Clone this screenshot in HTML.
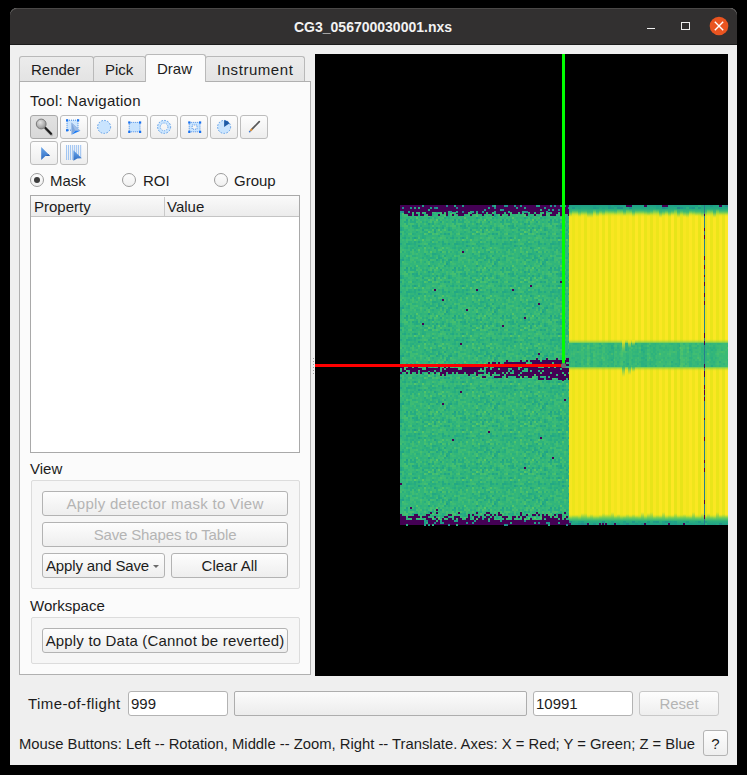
<!DOCTYPE html>
<html><head><meta charset="utf-8">
<style>
*{box-sizing:border-box;margin:0;padding:0}
html,body{width:747px;height:775px;background:#000;overflow:hidden;font-family:"Liberation Sans",sans-serif;font-size:15px;color:#1c1c1c}
.a{position:absolute}
.t{position:absolute;white-space:pre;line-height:17px;height:17px}
#win{position:absolute;left:10px;top:8px;width:727px;height:757px;background:#efefef;border-radius:7px 7px 0 0;overflow:hidden}
#title{position:absolute;left:10px;top:8px;width:727px;height:37px;background:#323030;border-radius:7px 7px 0 0;border-top:1px solid #4a4847;border-bottom:1px solid #1c1c1c}
.tab{position:absolute;top:56px;height:26px;background:linear-gradient(#ececec,#e3e3e3);border:1px solid #b9b9b9;border-bottom:none;border-radius:3px 3px 0 0}
.tab.sel{top:54px;height:28px;background:#fbfbfb;z-index:2}
#pane{position:absolute;left:19px;top:81px;width:292px;height:594px;background:#fbfbfb;border:1px solid #b0b0b0;z-index:1}
.tb{position:absolute;width:28px;height:24px;border:1px solid #bdbdbd;border-radius:3px;background:linear-gradient(#fdfdfd,#ededed);z-index:3}
.tb svg{display:block}
.radio{position:absolute;width:14px;height:14px;border-radius:50%;border:1px solid #9c9c9c;background:linear-gradient(#fdfdfd,#f0f0f0);z-index:3}
.btn{position:absolute;border:1px solid #b3b3b3;border-radius:3px;background:linear-gradient(#fdfdfd,#eeeeee);z-index:4}
.gb{position:absolute;border:1px solid #dcdcdc;border-radius:2px;background:#f6f6f6;z-index:3}
.inp{position:absolute;background:#fff;border:1px solid #b3b3b3;border-radius:3px}
.dis{color:#b4b4b4}
.z{z-index:5}
</style></head><body>
<div id="win"></div>
<div id="title"></div>
<div class="t z" style="left:294px;top:19px;font-weight:bold;font-size:14px;color:#f2f2f2">CG3_056700030001.nxs</div>
<!-- window controls -->
<div class="a" style="left:647px;top:28px;width:8px;height:1.3px;background:#f0f0f0"></div>
<div class="a" style="left:681px;top:22px;width:9px;height:8px;border:1.3px solid #f0f0f0"></div>
<svg class="a" style="left:709px;top:16px" width="20" height="20" viewBox="0 0 20 20"><circle cx="10" cy="10" r="9.3" fill="#e95420"/><path d="M5.8 5.8L14.2 14.2M14.2 5.8L5.8 14.2" stroke="#fff" stroke-width="1.4"/></svg>

<!-- tabs -->
<div class="tab" style="left:19px;width:75px"></div>
<div class="tab" style="left:93px;width:53px"></div>
<div class="tab sel" style="left:145px;width:61px"></div>
<div class="tab" style="left:205px;width:100px"></div>
<div class="t z" style="left:31px;top:61px">Render</div>
<div class="t z" style="left:105px;top:61px">Pick</div>
<div class="t z" style="left:157px;top:60px">Draw</div>
<div class="t z" style="left:217px;top:61px;letter-spacing:0.55px">Instrument</div>
<div id="pane"></div>

<div class="t z" style="left:30px;top:92px;letter-spacing:0.25px">Tool: Navigation</div>
<!-- tool buttons -->
<div class="tb" style="left:30px;top:115px;background:linear-gradient(#e2e2e2,#d8d8d8);border-color:#a8a8a8"><div class="a" style="left:-1px;top:-1px"><svg width="28" height="24" viewBox="0 0 28 24"><defs><radialGradient id="lg" cx="0.4" cy="0.35" r="0.7"><stop offset="0" stop-color="#e4e4e4"/><stop offset="1" stop-color="#8e8e8e"/></radialGradient></defs><path d="M15.2 12.8L21 18.8" stroke="#6b6b6b" stroke-width="3" stroke-linecap="round" opacity="0.35" transform="translate(0.6,0.8)"/><path d="M15.2 12.8L21 18.8" stroke="#1e1e1e" stroke-width="2.2" stroke-linecap="round"/><circle cx="11.2" cy="9" r="4.9" fill="url(#lg)" stroke="#7a7a7a" stroke-width="1"/></svg></div></div>
<div class="tb" style="left:60px;top:115px"><div class="a" style="left:-1px;top:-1px"><svg width="28" height="24" viewBox="0 0 28 24"><rect x="7" y="5.2" width="11" height="10" fill="#cfe6fd" stroke="#2f7fe0" stroke-width="0.9" stroke-dasharray="1 1"/><g fill="#1b74ef"><rect x="6" y="4.2" width="2.2" height="2.2"/><rect x="17" y="4.2" width="2.2" height="2.2"/><rect x="6" y="14.2" width="2.2" height="2.2"/></g><path d="M11.4 7.6L20.3 15.8L15.3 15.8L11.4 19.8Z" fill="#7ea6dc"/><path d="M11.4 7.6L15.3 15.8L20.3 15.8Z" fill="#9fbde6"/><path d="M15.3 15.8L20.3 15.8L11.4 19.8Z" fill="#1c7cf5"/></svg></div></div>
<div class="tb" style="left:90px;top:115px"><div class="a" style="left:-1px;top:-1px"><svg width="28" height="24" viewBox="0 0 28 24"><circle cx="14.1" cy="11.9" r="6.5" fill="#c9e4fe" stroke="#5d9ee8" stroke-width="1" stroke-dasharray="1.6 1.4"/></svg></div></div>
<div class="tb" style="left:120px;top:115px"><div class="a" style="left:-1px;top:-1px"><svg width="28" height="24" viewBox="0 0 28 24"><rect x="9.2" y="7.4" width="10.8" height="9.4" fill="#c9e4fe" stroke="#3b84e4" stroke-width="0.9" stroke-dasharray="1 1"/><g fill="#1670f0"><rect x="8.2" y="6.4" width="2.2" height="2.2"/><rect x="19" y="6.4" width="2.2" height="2.2"/><rect x="8.2" y="15.8" width="2.2" height="2.2"/><rect x="19" y="15.8" width="2.2" height="2.2"/></g></svg></div></div>
<div class="tb" style="left:150px;top:115px"><div class="a" style="left:-1px;top:-1px"><svg width="28" height="24" viewBox="0 0 28 24"><path d="M14.1 5.4A6.5 6.5 0 1 1 14.09 5.4ZM14.1 8.1A3.8 3.8 0 1 0 14.11 8.1Z" fill="#c9e4fe" fill-rule="evenodd"/><circle cx="14.1" cy="11.9" r="6.5" fill="none" stroke="#5d9ee8" stroke-width="1" stroke-dasharray="1.6 1.4"/><circle cx="14.1" cy="11.9" r="3.8" fill="none" stroke="#5d9ee8" stroke-width="0.9" stroke-dasharray="1.2 1.2"/></svg></div></div>
<div class="tb" style="left:180px;top:115px"><div class="a" style="left:-1px;top:-1px"><svg width="28" height="24" viewBox="0 0 28 24"><path d="M9.2 7.4H20V16.8H9.2ZM12.2 10V14.2H17V10Z" fill="#c9e4fe" fill-rule="evenodd"/><rect x="9.2" y="7.4" width="10.8" height="9.4" fill="none" stroke="#3b84e4" stroke-width="0.9" stroke-dasharray="1 1"/><rect x="12.2" y="10" width="4.8" height="4.2" fill="none" stroke="#3b84e4" stroke-width="0.8" stroke-dasharray="1 1"/><g fill="#1670f0"><rect x="8.2" y="6.4" width="2.2" height="2.2"/><rect x="19" y="6.4" width="2.2" height="2.2"/><rect x="8.2" y="15.8" width="2.2" height="2.2"/><rect x="19" y="15.8" width="2.2" height="2.2"/></g></svg></div></div>
<div class="tb" style="left:210px;top:115px"><div class="a" style="left:-1px;top:-1px"><svg width="28" height="24" viewBox="0 0 28 24"><circle cx="14.1" cy="11.9" r="6.5" fill="#c9e4fe" stroke="#5d9ee8" stroke-width="1" stroke-dasharray="1.6 1.4"/><path d="M14.1 11.9L14.1 5.2A6.7 6.7 0 0 1 19.6 8.2Z" fill="#1d5aa6"/></svg></div></div>
<div class="tb" style="left:240px;top:115px"><div class="a" style="left:-1px;top:-1px"><svg width="28" height="24" viewBox="0 0 28 24"><path d="M12 14.2L19.3 6.6" stroke="#585858" stroke-width="1.7" stroke-linecap="round"/><path d="M10.2 16L12.2 14" stroke="#d08a3a" stroke-width="1.8"/><circle cx="9.7" cy="16.6" r="0.9" fill="#3a78d8"/></svg></div></div>
<div class="tb" style="left:30px;top:141px"><div class="a" style="left:-1px;top:-1px"><svg width="28" height="24" viewBox="0 0 28 24"><defs><linearGradient id="ag" x1="0" y1="0" x2="0" y2="1"><stop offset="0" stop-color="#6aa6ea"/><stop offset="1" stop-color="#2f6cc2"/></linearGradient></defs><path d="M11.2 6L20 14.7L15.4 14.9L11.2 19Z" fill="url(#ag)"/><path d="M15.4 14.9L20 14.7L18.6 13.3Z" fill="#2559a8"/></svg></div></div>
<div class="tb" style="left:60px;top:141px"><div class="a" style="left:-1px;top:-1px"><svg width="28" height="24" viewBox="0 0 28 24"><g stroke="#8dbaf0" stroke-width="0.9"><path d="M6.6 4V19M8.6 4V19M10.6 4V19M12.7 4V19M14.7 4V12M16.7 4V14M18.6 4V16M20.7 4V17"/></g><path d="M13.4 9.2L21.8 17.3L17.3 17.5L13.4 19.8Z" fill="url(#ag)"/></svg></div></div>

<!-- radios -->
<div class="radio" style="left:30px;top:173px"><div class="a" style="left:3px;top:3px;width:6px;height:6px;border-radius:50%;background:#3c3c3c"></div></div>
<div class="t z" style="left:50px;top:172px">Mask</div>
<div class="radio" style="left:122px;top:173px"></div>
<div class="t z" style="left:143px;top:172px">ROI</div>
<div class="radio" style="left:214px;top:173px"></div>
<div class="t z" style="left:234px;top:172px">Group</div>

<!-- table -->
<div class="a z" style="left:30px;top:195px;width:270px;height:258px;background:#fff;border:1px solid #a9a9a9"></div>
<div class="a z" style="left:31px;top:196px;width:268px;height:21px;background:linear-gradient(#fafafa,#ececec);border-bottom:1px solid #c4c4c4"></div>
<div class="a z" style="left:164px;top:197px;width:1px;height:19px;background:#c9c9c9"></div>
<div class="t z" style="left:34px;top:198px">Property</div>
<div class="t z" style="left:167px;top:198px">Value</div>

<div class="t z" style="left:30px;top:460px">View</div>
<div class="gb" style="left:31px;top:480px;width:269px;height:109px"></div>
<div class="btn" style="left:42px;top:491px;width:246px;height:25px"></div>
<div class="t z dis" style="left:42px;width:246px;text-align:center;top:495px;letter-spacing:0.3px">Apply detector mask to View</div>
<div class="btn" style="left:42px;top:522px;width:246px;height:25px"></div>
<div class="t z dis" style="left:42px;width:246px;text-align:center;top:526px;letter-spacing:-0.15px">Save Shapes to Table</div>
<div class="btn" style="left:42px;top:553px;width:123px;height:25px"></div>
<div class="t z" style="left:46px;top:557px;letter-spacing:-0.15px">Apply and Save</div>
<div class="a z" style="left:153px;top:565px;width:0;height:0;border-left:3px solid transparent;border-right:3px solid transparent;border-top:3px solid #6a6a6a"></div>
<div class="btn" style="left:171px;top:553px;width:117px;height:25px"></div>
<div class="t z" style="left:171px;width:117px;text-align:center;top:557px">Clear All</div>

<div class="t z" style="left:30px;top:597px">Workspace</div>
<div class="gb" style="left:31px;top:617px;width:269px;height:47px"></div>
<div class="btn" style="left:42px;top:628px;width:246px;height:25px"></div>
<div class="t z" style="left:42px;width:246px;text-align:center;top:632px;letter-spacing:0.18px">Apply to Data (Cannot be reverted)</div>

<!-- view -->
<svg class="a" style="left:315px;top:54px" width="413" height="622" viewBox="0 0 413 622" shape-rendering="crispEdges">
<defs>
<pattern id="tex" x="85" y="151" width="48" height="48" patternUnits="userSpaceOnUse">
<rect width="48" height="48" fill="#31b57b"/>
<rect x="2" y="0" width="2" height="2" fill="#37b878"/>
<rect x="8" y="0" width="2" height="2" fill="#28ae80"/>
<rect x="12" y="0" width="2" height="2" fill="#3fbc73"/>
<rect x="14" y="0" width="2" height="2" fill="#37b878"/>
<rect x="16" y="0" width="2" height="2" fill="#3fbc73"/>
<rect x="20" y="0" width="2" height="2" fill="#35b779"/>
<rect x="24" y="0" width="2" height="2" fill="#23a983"/>
<rect x="26" y="0" width="2" height="2" fill="#3bbb75"/>
<rect x="28" y="0" width="2" height="2" fill="#37b878"/>
<rect x="30" y="0" width="2" height="2" fill="#37b878"/>
<rect x="32" y="0" width="2" height="2" fill="#22a884"/>
<rect x="34" y="0" width="2" height="2" fill="#22a884"/>
<rect x="36" y="0" width="2" height="2" fill="#28ae80"/>
<rect x="38" y="0" width="2" height="2" fill="#2cb17e"/>
<rect x="44" y="0" width="2" height="2" fill="#37b878"/>
<rect x="46" y="0" width="2" height="2" fill="#2ab07f"/>
<rect x="2" y="2" width="2" height="2" fill="#35b779"/>
<rect x="4" y="2" width="2" height="2" fill="#2ab07f"/>
<rect x="6" y="2" width="2" height="2" fill="#48c16e"/>
<rect x="8" y="2" width="2" height="2" fill="#38b977"/>
<rect x="10" y="2" width="2" height="2" fill="#40bd72"/>
<rect x="12" y="2" width="2" height="2" fill="#2ab07f"/>
<rect x="14" y="2" width="2" height="2" fill="#29af7f"/>
<rect x="20" y="2" width="2" height="2" fill="#38b977"/>
<rect x="24" y="2" width="2" height="2" fill="#2db27d"/>
<rect x="26" y="2" width="2" height="2" fill="#27ad81"/>
<rect x="28" y="2" width="2" height="2" fill="#2cb17e"/>
<rect x="30" y="2" width="2" height="2" fill="#40bd72"/>
<rect x="32" y="2" width="2" height="2" fill="#29af7f"/>
<rect x="36" y="2" width="2" height="2" fill="#37b878"/>
<rect x="38" y="2" width="2" height="2" fill="#24aa83"/>
<rect x="42" y="2" width="2" height="2" fill="#42be71"/>
<rect x="44" y="2" width="2" height="2" fill="#21a685"/>
<rect x="2" y="4" width="2" height="2" fill="#28ae80"/>
<rect x="4" y="4" width="2" height="2" fill="#37b878"/>
<rect x="8" y="4" width="2" height="2" fill="#24aa83"/>
<rect x="10" y="4" width="2" height="2" fill="#3bbb75"/>
<rect x="12" y="4" width="2" height="2" fill="#3aba76"/>
<rect x="14" y="4" width="2" height="2" fill="#3dbc74"/>
<rect x="16" y="4" width="2" height="2" fill="#44bf70"/>
<rect x="22" y="4" width="2" height="2" fill="#25ac82"/>
<rect x="24" y="4" width="2" height="2" fill="#38b977"/>
<rect x="26" y="4" width="2" height="2" fill="#2ab07f"/>
<rect x="28" y="4" width="2" height="2" fill="#2cb17e"/>
<rect x="30" y="4" width="2" height="2" fill="#25ac82"/>
<rect x="32" y="4" width="2" height="2" fill="#27ad81"/>
<rect x="34" y="4" width="2" height="2" fill="#2cb17e"/>
<rect x="36" y="4" width="2" height="2" fill="#42be71"/>
<rect x="38" y="4" width="2" height="2" fill="#21a685"/>
<rect x="40" y="4" width="2" height="2" fill="#24aa83"/>
<rect x="44" y="4" width="2" height="2" fill="#44bf70"/>
<rect x="46" y="4" width="2" height="2" fill="#38b977"/>
<rect x="0" y="6" width="2" height="2" fill="#22a785"/>
<rect x="2" y="6" width="2" height="2" fill="#1fa287"/>
<rect x="6" y="6" width="2" height="2" fill="#29af7f"/>
<rect x="8" y="6" width="2" height="2" fill="#26ad81"/>
<rect x="10" y="6" width="2" height="2" fill="#3dbc74"/>
<rect x="12" y="6" width="2" height="2" fill="#3fbc73"/>
<rect x="18" y="6" width="2" height="2" fill="#37b878"/>
<rect x="20" y="6" width="2" height="2" fill="#46c06f"/>
<rect x="22" y="6" width="2" height="2" fill="#38b977"/>
<rect x="24" y="6" width="2" height="2" fill="#37b878"/>
<rect x="26" y="6" width="2" height="2" fill="#38b977"/>
<rect x="28" y="6" width="2" height="2" fill="#23a983"/>
<rect x="30" y="6" width="2" height="2" fill="#42be71"/>
<rect x="32" y="6" width="2" height="2" fill="#3dbc74"/>
<rect x="34" y="6" width="2" height="2" fill="#38b977"/>
<rect x="36" y="6" width="2" height="2" fill="#21a685"/>
<rect x="38" y="6" width="2" height="2" fill="#2ab07f"/>
<rect x="40" y="6" width="2" height="2" fill="#3bbb75"/>
<rect x="42" y="6" width="2" height="2" fill="#22a785"/>
<rect x="46" y="6" width="2" height="2" fill="#3fbc73"/>
<rect x="0" y="8" width="2" height="2" fill="#25ab82"/>
<rect x="2" y="8" width="2" height="2" fill="#46c06f"/>
<rect x="4" y="8" width="2" height="2" fill="#38b977"/>
<rect x="10" y="8" width="2" height="2" fill="#3aba76"/>
<rect x="14" y="8" width="2" height="2" fill="#40bd72"/>
<rect x="16" y="8" width="2" height="2" fill="#2ab07f"/>
<rect x="18" y="8" width="2" height="2" fill="#2db27d"/>
<rect x="20" y="8" width="2" height="2" fill="#3fbc73"/>
<rect x="24" y="8" width="2" height="2" fill="#28ae80"/>
<rect x="26" y="8" width="2" height="2" fill="#3dbc74"/>
<rect x="28" y="8" width="2" height="2" fill="#44bf70"/>
<rect x="30" y="8" width="2" height="2" fill="#2db27d"/>
<rect x="32" y="8" width="2" height="2" fill="#25ab82"/>
<rect x="40" y="8" width="2" height="2" fill="#44bf70"/>
<rect x="42" y="8" width="2" height="2" fill="#27ad81"/>
<rect x="44" y="8" width="2" height="2" fill="#42be71"/>
<rect x="46" y="8" width="2" height="2" fill="#25ac82"/>
<rect x="0" y="10" width="2" height="2" fill="#29af7f"/>
<rect x="2" y="10" width="2" height="2" fill="#38b977"/>
<rect x="4" y="10" width="2" height="2" fill="#3fbc73"/>
<rect x="6" y="10" width="2" height="2" fill="#3bbb75"/>
<rect x="14" y="10" width="2" height="2" fill="#38b977"/>
<rect x="20" y="10" width="2" height="2" fill="#38b977"/>
<rect x="24" y="10" width="2" height="2" fill="#3aba76"/>
<rect x="26" y="10" width="2" height="2" fill="#38b977"/>
<rect x="28" y="10" width="2" height="2" fill="#4ec36b"/>
<rect x="32" y="10" width="2" height="2" fill="#2db27d"/>
<rect x="38" y="10" width="2" height="2" fill="#3dbc74"/>
<rect x="42" y="10" width="2" height="2" fill="#35b779"/>
<rect x="44" y="10" width="2" height="2" fill="#4ac16d"/>
<rect x="46" y="10" width="2" height="2" fill="#1fa187"/>
<rect x="0" y="12" width="2" height="2" fill="#26ad81"/>
<rect x="4" y="12" width="2" height="2" fill="#35b779"/>
<rect x="8" y="12" width="2" height="2" fill="#2db27d"/>
<rect x="10" y="12" width="2" height="2" fill="#3aba76"/>
<rect x="14" y="12" width="2" height="2" fill="#2cb17e"/>
<rect x="16" y="12" width="2" height="2" fill="#54c568"/>
<rect x="20" y="12" width="2" height="2" fill="#2cb17e"/>
<rect x="28" y="12" width="2" height="2" fill="#1fa188"/>
<rect x="30" y="12" width="2" height="2" fill="#2cb17e"/>
<rect x="32" y="12" width="2" height="2" fill="#3dbc74"/>
<rect x="34" y="12" width="2" height="2" fill="#26ad81"/>
<rect x="38" y="12" width="2" height="2" fill="#3dbc74"/>
<rect x="40" y="12" width="2" height="2" fill="#3bbb75"/>
<rect x="42" y="12" width="2" height="2" fill="#44bf70"/>
<rect x="44" y="12" width="2" height="2" fill="#22a884"/>
<rect x="2" y="14" width="2" height="2" fill="#38b977"/>
<rect x="4" y="14" width="2" height="2" fill="#3fbc73"/>
<rect x="6" y="14" width="2" height="2" fill="#1fa188"/>
<rect x="8" y="14" width="2" height="2" fill="#3fbc73"/>
<rect x="10" y="14" width="2" height="2" fill="#24aa83"/>
<rect x="12" y="14" width="2" height="2" fill="#3aba76"/>
<rect x="14" y="14" width="2" height="2" fill="#24aa83"/>
<rect x="18" y="14" width="2" height="2" fill="#40bd72"/>
<rect x="24" y="14" width="2" height="2" fill="#3bbb75"/>
<rect x="30" y="14" width="2" height="2" fill="#46c06f"/>
<rect x="32" y="14" width="2" height="2" fill="#3fbc73"/>
<rect x="36" y="14" width="2" height="2" fill="#5ac864"/>
<rect x="38" y="14" width="2" height="2" fill="#26ad81"/>
<rect x="40" y="14" width="2" height="2" fill="#3dbc74"/>
<rect x="46" y="14" width="2" height="2" fill="#3aba76"/>
<rect x="2" y="16" width="2" height="2" fill="#38b977"/>
<rect x="4" y="16" width="2" height="2" fill="#24aa83"/>
<rect x="6" y="16" width="2" height="2" fill="#24aa83"/>
<rect x="8" y="16" width="2" height="2" fill="#38b977"/>
<rect x="10" y="16" width="2" height="2" fill="#27ad81"/>
<rect x="12" y="16" width="2" height="2" fill="#27ad81"/>
<rect x="14" y="16" width="2" height="2" fill="#24aa83"/>
<rect x="16" y="16" width="2" height="2" fill="#42be71"/>
<rect x="18" y="16" width="2" height="2" fill="#3aba76"/>
<rect x="20" y="16" width="2" height="2" fill="#44bf70"/>
<rect x="22" y="16" width="2" height="2" fill="#27ad81"/>
<rect x="26" y="16" width="2" height="2" fill="#26ad81"/>
<rect x="28" y="16" width="2" height="2" fill="#3aba76"/>
<rect x="30" y="16" width="2" height="2" fill="#46c06f"/>
<rect x="32" y="16" width="2" height="2" fill="#28ae80"/>
<rect x="34" y="16" width="2" height="2" fill="#46c06f"/>
<rect x="36" y="16" width="2" height="2" fill="#3dbc74"/>
<rect x="40" y="16" width="2" height="2" fill="#21a685"/>
<rect x="42" y="16" width="2" height="2" fill="#44bf70"/>
<rect x="46" y="16" width="2" height="2" fill="#2ab07f"/>
<rect x="0" y="18" width="2" height="2" fill="#35b779"/>
<rect x="2" y="18" width="2" height="2" fill="#37b878"/>
<rect x="4" y="18" width="2" height="2" fill="#44bf70"/>
<rect x="6" y="18" width="2" height="2" fill="#27ad81"/>
<rect x="8" y="18" width="2" height="2" fill="#3fbc73"/>
<rect x="10" y="18" width="2" height="2" fill="#44bf70"/>
<rect x="12" y="18" width="2" height="2" fill="#44bf70"/>
<rect x="16" y="18" width="2" height="2" fill="#29af7f"/>
<rect x="18" y="18" width="2" height="2" fill="#3fbc73"/>
<rect x="24" y="18" width="2" height="2" fill="#44bf70"/>
<rect x="28" y="18" width="2" height="2" fill="#20a386"/>
<rect x="30" y="18" width="2" height="2" fill="#2db27d"/>
<rect x="32" y="18" width="2" height="2" fill="#22a785"/>
<rect x="34" y="18" width="2" height="2" fill="#3bbb75"/>
<rect x="38" y="18" width="2" height="2" fill="#2ab07f"/>
<rect x="42" y="18" width="2" height="2" fill="#3bbb75"/>
<rect x="46" y="18" width="2" height="2" fill="#42be71"/>
<rect x="2" y="20" width="2" height="2" fill="#3fbc73"/>
<rect x="4" y="20" width="2" height="2" fill="#44bf70"/>
<rect x="6" y="20" width="2" height="2" fill="#46c06f"/>
<rect x="8" y="20" width="2" height="2" fill="#2ab07f"/>
<rect x="10" y="20" width="2" height="2" fill="#3bbb75"/>
<rect x="12" y="20" width="2" height="2" fill="#22a785"/>
<rect x="14" y="20" width="2" height="2" fill="#26ad81"/>
<rect x="16" y="20" width="2" height="2" fill="#21a685"/>
<rect x="18" y="20" width="2" height="2" fill="#3fbc73"/>
<rect x="20" y="20" width="2" height="2" fill="#25ac82"/>
<rect x="28" y="20" width="2" height="2" fill="#2ab07f"/>
<rect x="32" y="20" width="2" height="2" fill="#4ac16d"/>
<rect x="36" y="20" width="2" height="2" fill="#38b977"/>
<rect x="38" y="20" width="2" height="2" fill="#3dbc74"/>
<rect x="42" y="20" width="2" height="2" fill="#25ac82"/>
<rect x="44" y="20" width="2" height="2" fill="#2cb17e"/>
<rect x="46" y="20" width="2" height="2" fill="#3fbc73"/>
<rect x="0" y="22" width="2" height="2" fill="#23a983"/>
<rect x="2" y="22" width="2" height="2" fill="#2ab07f"/>
<rect x="4" y="22" width="2" height="2" fill="#3dbc74"/>
<rect x="6" y="22" width="2" height="2" fill="#3bbb75"/>
<rect x="10" y="22" width="2" height="2" fill="#3bbb75"/>
<rect x="14" y="22" width="2" height="2" fill="#26ad81"/>
<rect x="16" y="22" width="2" height="2" fill="#23a983"/>
<rect x="18" y="22" width="2" height="2" fill="#2ab07f"/>
<rect x="20" y="22" width="2" height="2" fill="#3dbc74"/>
<rect x="22" y="22" width="2" height="2" fill="#2cb17e"/>
<rect x="24" y="22" width="2" height="2" fill="#28ae80"/>
<rect x="26" y="22" width="2" height="2" fill="#29af7f"/>
<rect x="28" y="22" width="2" height="2" fill="#24aa83"/>
<rect x="32" y="22" width="2" height="2" fill="#26ad81"/>
<rect x="36" y="22" width="2" height="2" fill="#20a386"/>
<rect x="40" y="22" width="2" height="2" fill="#2ab07f"/>
<rect x="42" y="22" width="2" height="2" fill="#21a685"/>
<rect x="44" y="22" width="2" height="2" fill="#3aba76"/>
<rect x="0" y="24" width="2" height="2" fill="#20a486"/>
<rect x="2" y="24" width="2" height="2" fill="#28ae80"/>
<rect x="6" y="24" width="2" height="2" fill="#2cb17e"/>
<rect x="8" y="24" width="2" height="2" fill="#3bbb75"/>
<rect x="10" y="24" width="2" height="2" fill="#3aba76"/>
<rect x="12" y="24" width="2" height="2" fill="#3aba76"/>
<rect x="16" y="24" width="2" height="2" fill="#42be71"/>
<rect x="18" y="24" width="2" height="2" fill="#3aba76"/>
<rect x="20" y="24" width="2" height="2" fill="#37b878"/>
<rect x="22" y="24" width="2" height="2" fill="#21a585"/>
<rect x="24" y="24" width="2" height="2" fill="#3dbc74"/>
<rect x="26" y="24" width="2" height="2" fill="#42be71"/>
<rect x="30" y="24" width="2" height="2" fill="#2cb17e"/>
<rect x="32" y="24" width="2" height="2" fill="#4cc26c"/>
<rect x="34" y="24" width="2" height="2" fill="#22a884"/>
<rect x="36" y="24" width="2" height="2" fill="#37b878"/>
<rect x="38" y="24" width="2" height="2" fill="#54c568"/>
<rect x="40" y="24" width="2" height="2" fill="#28ae80"/>
<rect x="42" y="24" width="2" height="2" fill="#3aba76"/>
<rect x="44" y="24" width="2" height="2" fill="#4cc26c"/>
<rect x="0" y="26" width="2" height="2" fill="#38b977"/>
<rect x="2" y="26" width="2" height="2" fill="#3dbc74"/>
<rect x="4" y="26" width="2" height="2" fill="#28ae80"/>
<rect x="10" y="26" width="2" height="2" fill="#3bbb75"/>
<rect x="16" y="26" width="2" height="2" fill="#27ad81"/>
<rect x="20" y="26" width="2" height="2" fill="#3bbb75"/>
<rect x="24" y="26" width="2" height="2" fill="#28ae80"/>
<rect x="26" y="26" width="2" height="2" fill="#28ae80"/>
<rect x="28" y="26" width="2" height="2" fill="#58c765"/>
<rect x="30" y="26" width="2" height="2" fill="#40bd72"/>
<rect x="32" y="26" width="2" height="2" fill="#38b977"/>
<rect x="34" y="26" width="2" height="2" fill="#1fa187"/>
<rect x="36" y="26" width="2" height="2" fill="#38b977"/>
<rect x="38" y="26" width="2" height="2" fill="#37b878"/>
<rect x="40" y="26" width="2" height="2" fill="#48c16e"/>
<rect x="42" y="26" width="2" height="2" fill="#37b878"/>
<rect x="46" y="26" width="2" height="2" fill="#37b878"/>
<rect x="0" y="28" width="2" height="2" fill="#21a685"/>
<rect x="2" y="28" width="2" height="2" fill="#3fbc73"/>
<rect x="6" y="28" width="2" height="2" fill="#29af7f"/>
<rect x="8" y="28" width="2" height="2" fill="#42be71"/>
<rect x="10" y="28" width="2" height="2" fill="#4ac16d"/>
<rect x="12" y="28" width="2" height="2" fill="#25ab82"/>
<rect x="14" y="28" width="2" height="2" fill="#2ab07f"/>
<rect x="20" y="28" width="2" height="2" fill="#2db27d"/>
<rect x="22" y="28" width="2" height="2" fill="#27ad81"/>
<rect x="24" y="28" width="2" height="2" fill="#50c46a"/>
<rect x="26" y="28" width="2" height="2" fill="#3fbc73"/>
<rect x="28" y="28" width="2" height="2" fill="#25ac82"/>
<rect x="30" y="28" width="2" height="2" fill="#25ab82"/>
<rect x="32" y="28" width="2" height="2" fill="#48c16e"/>
<rect x="34" y="28" width="2" height="2" fill="#3dbc74"/>
<rect x="36" y="28" width="2" height="2" fill="#4ac16d"/>
<rect x="38" y="28" width="2" height="2" fill="#3bbb75"/>
<rect x="40" y="28" width="2" height="2" fill="#28ae80"/>
<rect x="44" y="28" width="2" height="2" fill="#20a486"/>
<rect x="46" y="28" width="2" height="2" fill="#29af7f"/>
<rect x="2" y="30" width="2" height="2" fill="#37b878"/>
<rect x="4" y="30" width="2" height="2" fill="#29af7f"/>
<rect x="8" y="30" width="2" height="2" fill="#37b878"/>
<rect x="10" y="30" width="2" height="2" fill="#35b779"/>
<rect x="12" y="30" width="2" height="2" fill="#38b977"/>
<rect x="18" y="30" width="2" height="2" fill="#3bbb75"/>
<rect x="22" y="30" width="2" height="2" fill="#28ae80"/>
<rect x="24" y="30" width="2" height="2" fill="#2ab07f"/>
<rect x="38" y="30" width="2" height="2" fill="#25ac82"/>
<rect x="40" y="30" width="2" height="2" fill="#37b878"/>
<rect x="42" y="30" width="2" height="2" fill="#3fbc73"/>
<rect x="44" y="30" width="2" height="2" fill="#37b878"/>
<rect x="0" y="32" width="2" height="2" fill="#37b878"/>
<rect x="2" y="32" width="2" height="2" fill="#27ad81"/>
<rect x="4" y="32" width="2" height="2" fill="#22a785"/>
<rect x="8" y="32" width="2" height="2" fill="#28ae80"/>
<rect x="10" y="32" width="2" height="2" fill="#3aba76"/>
<rect x="12" y="32" width="2" height="2" fill="#26ad81"/>
<rect x="14" y="32" width="2" height="2" fill="#1fa187"/>
<rect x="16" y="32" width="2" height="2" fill="#27ad81"/>
<rect x="18" y="32" width="2" height="2" fill="#46c06f"/>
<rect x="20" y="32" width="2" height="2" fill="#2db27d"/>
<rect x="22" y="32" width="2" height="2" fill="#25ab82"/>
<rect x="24" y="32" width="2" height="2" fill="#29af7f"/>
<rect x="26" y="32" width="2" height="2" fill="#37b878"/>
<rect x="28" y="32" width="2" height="2" fill="#37b878"/>
<rect x="32" y="32" width="2" height="2" fill="#44bf70"/>
<rect x="34" y="32" width="2" height="2" fill="#3aba76"/>
<rect x="38" y="32" width="2" height="2" fill="#38b977"/>
<rect x="40" y="32" width="2" height="2" fill="#48c16e"/>
<rect x="42" y="32" width="2" height="2" fill="#3dbc74"/>
<rect x="44" y="32" width="2" height="2" fill="#3fbc73"/>
<rect x="46" y="32" width="2" height="2" fill="#26ad81"/>
<rect x="2" y="34" width="2" height="2" fill="#3aba76"/>
<rect x="6" y="34" width="2" height="2" fill="#3fbc73"/>
<rect x="8" y="34" width="2" height="2" fill="#38b977"/>
<rect x="10" y="34" width="2" height="2" fill="#3dbc74"/>
<rect x="14" y="34" width="2" height="2" fill="#56c667"/>
<rect x="16" y="34" width="2" height="2" fill="#40bd72"/>
<rect x="22" y="34" width="2" height="2" fill="#56c667"/>
<rect x="26" y="34" width="2" height="2" fill="#3bbb75"/>
<rect x="28" y="34" width="2" height="2" fill="#3dbc74"/>
<rect x="32" y="34" width="2" height="2" fill="#26ad81"/>
<rect x="38" y="34" width="2" height="2" fill="#3fbc73"/>
<rect x="40" y="34" width="2" height="2" fill="#3bbb75"/>
<rect x="44" y="34" width="2" height="2" fill="#3bbb75"/>
<rect x="46" y="34" width="2" height="2" fill="#38b977"/>
<rect x="6" y="36" width="2" height="2" fill="#3aba76"/>
<rect x="8" y="36" width="2" height="2" fill="#27ad81"/>
<rect x="10" y="36" width="2" height="2" fill="#2ab07f"/>
<rect x="14" y="36" width="2" height="2" fill="#24aa83"/>
<rect x="16" y="36" width="2" height="2" fill="#2db27d"/>
<rect x="18" y="36" width="2" height="2" fill="#21a685"/>
<rect x="20" y="36" width="2" height="2" fill="#2ab07f"/>
<rect x="22" y="36" width="2" height="2" fill="#38b977"/>
<rect x="24" y="36" width="2" height="2" fill="#38b977"/>
<rect x="30" y="36" width="2" height="2" fill="#25ab82"/>
<rect x="32" y="36" width="2" height="2" fill="#4ac16d"/>
<rect x="34" y="36" width="2" height="2" fill="#37b878"/>
<rect x="36" y="36" width="2" height="2" fill="#3fbc73"/>
<rect x="38" y="36" width="2" height="2" fill="#28ae80"/>
<rect x="42" y="36" width="2" height="2" fill="#22a785"/>
<rect x="44" y="36" width="2" height="2" fill="#3bbb75"/>
<rect x="46" y="36" width="2" height="2" fill="#3dbc74"/>
<rect x="0" y="38" width="2" height="2" fill="#22a785"/>
<rect x="4" y="38" width="2" height="2" fill="#38b977"/>
<rect x="6" y="38" width="2" height="2" fill="#22a884"/>
<rect x="8" y="38" width="2" height="2" fill="#22a785"/>
<rect x="10" y="38" width="2" height="2" fill="#26ad81"/>
<rect x="12" y="38" width="2" height="2" fill="#2ab07f"/>
<rect x="14" y="38" width="2" height="2" fill="#25ab82"/>
<rect x="20" y="38" width="2" height="2" fill="#38b977"/>
<rect x="22" y="38" width="2" height="2" fill="#3aba76"/>
<rect x="24" y="38" width="2" height="2" fill="#44bf70"/>
<rect x="26" y="38" width="2" height="2" fill="#40bd72"/>
<rect x="28" y="38" width="2" height="2" fill="#25ab82"/>
<rect x="30" y="38" width="2" height="2" fill="#2cb17e"/>
<rect x="32" y="38" width="2" height="2" fill="#26ad81"/>
<rect x="34" y="38" width="2" height="2" fill="#26ad81"/>
<rect x="40" y="38" width="2" height="2" fill="#37b878"/>
<rect x="42" y="38" width="2" height="2" fill="#23a983"/>
<rect x="44" y="38" width="2" height="2" fill="#25ac82"/>
<rect x="6" y="40" width="2" height="2" fill="#29af7f"/>
<rect x="8" y="40" width="2" height="2" fill="#3aba76"/>
<rect x="14" y="40" width="2" height="2" fill="#2ab07f"/>
<rect x="18" y="40" width="2" height="2" fill="#1fa188"/>
<rect x="20" y="40" width="2" height="2" fill="#27ad81"/>
<rect x="24" y="40" width="2" height="2" fill="#24aa83"/>
<rect x="30" y="40" width="2" height="2" fill="#25ab82"/>
<rect x="36" y="40" width="2" height="2" fill="#37b878"/>
<rect x="38" y="40" width="2" height="2" fill="#38b977"/>
<rect x="42" y="40" width="2" height="2" fill="#28ae80"/>
<rect x="0" y="42" width="2" height="2" fill="#3aba76"/>
<rect x="4" y="42" width="2" height="2" fill="#29af7f"/>
<rect x="6" y="42" width="2" height="2" fill="#25ab82"/>
<rect x="10" y="42" width="2" height="2" fill="#29af7f"/>
<rect x="12" y="42" width="2" height="2" fill="#26ad81"/>
<rect x="16" y="42" width="2" height="2" fill="#2cb17e"/>
<rect x="20" y="42" width="2" height="2" fill="#37b878"/>
<rect x="22" y="42" width="2" height="2" fill="#2db27d"/>
<rect x="24" y="42" width="2" height="2" fill="#52c569"/>
<rect x="28" y="42" width="2" height="2" fill="#3fbc73"/>
<rect x="32" y="42" width="2" height="2" fill="#3fbc73"/>
<rect x="34" y="42" width="2" height="2" fill="#20a386"/>
<rect x="36" y="42" width="2" height="2" fill="#29af7f"/>
<rect x="40" y="42" width="2" height="2" fill="#38b977"/>
<rect x="42" y="42" width="2" height="2" fill="#52c569"/>
<rect x="46" y="42" width="2" height="2" fill="#42be71"/>
<rect x="0" y="44" width="2" height="2" fill="#3aba76"/>
<rect x="2" y="44" width="2" height="2" fill="#3dbc74"/>
<rect x="4" y="44" width="2" height="2" fill="#37b878"/>
<rect x="8" y="44" width="2" height="2" fill="#37b878"/>
<rect x="10" y="44" width="2" height="2" fill="#26ad81"/>
<rect x="12" y="44" width="2" height="2" fill="#40bd72"/>
<rect x="14" y="44" width="2" height="2" fill="#27ad81"/>
<rect x="18" y="44" width="2" height="2" fill="#50c46a"/>
<rect x="24" y="44" width="2" height="2" fill="#40bd72"/>
<rect x="28" y="44" width="2" height="2" fill="#29af7f"/>
<rect x="32" y="44" width="2" height="2" fill="#38b977"/>
<rect x="34" y="44" width="2" height="2" fill="#3aba76"/>
<rect x="36" y="44" width="2" height="2" fill="#29af7f"/>
<rect x="38" y="44" width="2" height="2" fill="#4ac16d"/>
<rect x="40" y="44" width="2" height="2" fill="#48c16e"/>
<rect x="46" y="44" width="2" height="2" fill="#2db27d"/>
<rect x="0" y="46" width="2" height="2" fill="#44bf70"/>
<rect x="2" y="46" width="2" height="2" fill="#29af7f"/>
<rect x="4" y="46" width="2" height="2" fill="#3aba76"/>
<rect x="6" y="46" width="2" height="2" fill="#2cb17e"/>
<rect x="8" y="46" width="2" height="2" fill="#29af7f"/>
<rect x="10" y="46" width="2" height="2" fill="#3aba76"/>
<rect x="12" y="46" width="2" height="2" fill="#42be71"/>
<rect x="16" y="46" width="2" height="2" fill="#2ab07f"/>
<rect x="18" y="46" width="2" height="2" fill="#3bbb75"/>
<rect x="24" y="46" width="2" height="2" fill="#46c06f"/>
<rect x="26" y="46" width="2" height="2" fill="#3fbc73"/>
<rect x="28" y="46" width="2" height="2" fill="#2cb17e"/>
<rect x="30" y="46" width="2" height="2" fill="#52c569"/>
<rect x="34" y="46" width="2" height="2" fill="#3bbb75"/>
<rect x="36" y="46" width="2" height="2" fill="#2ab07f"/>
<rect x="40" y="46" width="2" height="2" fill="#22a884"/>
<rect x="42" y="46" width="2" height="2" fill="#4ac16d"/>
<rect x="44" y="46" width="2" height="2" fill="#42be71"/>
<rect x="46" y="46" width="2" height="2" fill="#25ac82"/>
</pattern>
</defs>
<rect width="413" height="622" fill="#000"/>
<rect x="85" y="151" width="169" height="320" fill="url(#tex)"/>
<rect x="85" y="151" width="169" height="7" fill="#440154"/>
<rect x="85" y="157" width="2" height="2" fill="#1f9a8a"/>
<rect x="87" y="153" width="2" height="2" fill="#228d8d"/>
<rect x="87" y="157" width="2" height="2" fill="#218f8d"/>
<rect x="89" y="158" width="2" height="2" fill="#440154"/>
<rect x="91" y="158" width="2" height="2" fill="#440154"/>
<rect x="93" y="158" width="2" height="2" fill="#440154"/>
<rect x="93" y="160" width="2" height="2" fill="#440154"/>
<rect x="93" y="157" width="2" height="2" fill="#1f9f88"/>
<rect x="95" y="158" width="2" height="2" fill="#440154"/>
<rect x="95" y="160" width="2" height="2" fill="#440154"/>
<rect x="95" y="153" width="2" height="2" fill="#1e9d89"/>
<rect x="99" y="158" width="2" height="2" fill="#440154"/>
<rect x="99" y="160" width="2" height="2" fill="#440154"/>
<rect x="99" y="153" width="2" height="2" fill="#22a785"/>
<rect x="101" y="160" width="2" height="2" fill="#440154"/>
<rect x="103" y="153" width="2" height="2" fill="#2db27d"/>
<rect x="105" y="158" width="2" height="2" fill="#440154"/>
<rect x="105" y="160" width="2" height="2" fill="#440154"/>
<rect x="107" y="160" width="2" height="2" fill="#440154"/>
<rect x="107" y="151" width="2" height="2" fill="#1fa188"/>
<rect x="111" y="158" width="2" height="2" fill="#440154"/>
<rect x="113" y="158" width="2" height="2" fill="#440154"/>
<rect x="113" y="160" width="2" height="2" fill="#440154"/>
<rect x="113" y="155" width="2" height="2" fill="#25ac82"/>
<rect x="115" y="158" width="2" height="2" fill="#440154"/>
<rect x="115" y="160" width="2" height="2" fill="#440154"/>
<rect x="115" y="153" width="2" height="2" fill="#20a386"/>
<rect x="119" y="153" width="2" height="2" fill="#24868e"/>
<rect x="121" y="153" width="2" height="2" fill="#1e9d89"/>
<rect x="123" y="160" width="2" height="2" fill="#440154"/>
<rect x="127" y="158" width="2" height="2" fill="#440154"/>
<rect x="131" y="158" width="2" height="2" fill="#440154"/>
<rect x="131" y="160" width="2" height="2" fill="#440154"/>
<rect x="131" y="151" width="2" height="2" fill="#25848e"/>
<rect x="133" y="157" width="2" height="2" fill="#29af7f"/>
<rect x="135" y="157" width="2" height="2" fill="#1f9a8a"/>
<rect x="137" y="160" width="2" height="2" fill="#440154"/>
<rect x="139" y="151" width="2" height="2" fill="#23a983"/>
<rect x="141" y="158" width="2" height="2" fill="#440154"/>
<rect x="141" y="153" width="2" height="2" fill="#24868e"/>
<rect x="141" y="157" width="2" height="2" fill="#24aa83"/>
<rect x="143" y="158" width="2" height="2" fill="#440154"/>
<rect x="143" y="160" width="2" height="2" fill="#440154"/>
<rect x="145" y="158" width="2" height="2" fill="#440154"/>
<rect x="145" y="160" width="2" height="2" fill="#440154"/>
<rect x="147" y="158" width="2" height="2" fill="#440154"/>
<rect x="147" y="160" width="2" height="2" fill="#440154"/>
<rect x="147" y="151" width="2" height="2" fill="#1f9e89"/>
<rect x="147" y="157" width="2" height="2" fill="#287c8e"/>
<rect x="149" y="158" width="2" height="2" fill="#440154"/>
<rect x="151" y="158" width="2" height="2" fill="#440154"/>
<rect x="155" y="160" width="2" height="2" fill="#440154"/>
<rect x="155" y="157" width="2" height="2" fill="#27ad81"/>
<rect x="157" y="158" width="2" height="2" fill="#440154"/>
<rect x="157" y="157" width="2" height="2" fill="#1fa088"/>
<rect x="159" y="158" width="2" height="2" fill="#440154"/>
<rect x="161" y="157" width="2" height="2" fill="#1fa287"/>
<rect x="163" y="158" width="2" height="2" fill="#440154"/>
<rect x="165" y="158" width="2" height="2" fill="#440154"/>
<rect x="167" y="158" width="2" height="2" fill="#440154"/>
<rect x="167" y="160" width="2" height="2" fill="#440154"/>
<rect x="167" y="157" width="2" height="2" fill="#20928c"/>
<rect x="169" y="158" width="2" height="2" fill="#440154"/>
<rect x="169" y="155" width="2" height="2" fill="#1f9a8a"/>
<rect x="173" y="158" width="2" height="2" fill="#440154"/>
<rect x="173" y="153" width="2" height="2" fill="#20a386"/>
<rect x="175" y="158" width="2" height="2" fill="#440154"/>
<rect x="177" y="160" width="2" height="2" fill="#440154"/>
<rect x="177" y="151" width="2" height="2" fill="#20928c"/>
<rect x="179" y="151" width="2" height="2" fill="#29af7f"/>
<rect x="179" y="153" width="2" height="2" fill="#218e8d"/>
<rect x="179" y="157" width="2" height="2" fill="#22a785"/>
<rect x="181" y="158" width="2" height="2" fill="#440154"/>
<rect x="183" y="158" width="2" height="2" fill="#440154"/>
<rect x="185" y="158" width="2" height="2" fill="#440154"/>
<rect x="185" y="160" width="2" height="2" fill="#440154"/>
<rect x="185" y="155" width="2" height="2" fill="#22a884"/>
<rect x="187" y="158" width="2" height="2" fill="#440154"/>
<rect x="187" y="155" width="2" height="2" fill="#20938c"/>
<rect x="189" y="151" width="2" height="2" fill="#20928c"/>
<rect x="191" y="158" width="2" height="2" fill="#440154"/>
<rect x="191" y="151" width="2" height="2" fill="#20928c"/>
<rect x="193" y="158" width="2" height="2" fill="#440154"/>
<rect x="193" y="160" width="2" height="2" fill="#440154"/>
<rect x="193" y="157" width="2" height="2" fill="#23a983"/>
<rect x="197" y="158" width="2" height="2" fill="#440154"/>
<rect x="199" y="158" width="2" height="2" fill="#440154"/>
<rect x="199" y="151" width="2" height="2" fill="#1f958b"/>
<rect x="201" y="158" width="2" height="2" fill="#440154"/>
<rect x="201" y="153" width="2" height="2" fill="#1fa088"/>
<rect x="205" y="158" width="2" height="2" fill="#440154"/>
<rect x="205" y="151" width="2" height="2" fill="#1f968b"/>
<rect x="207" y="157" width="2" height="2" fill="#22a785"/>
<rect x="209" y="158" width="2" height="2" fill="#440154"/>
<rect x="209" y="153" width="2" height="2" fill="#22a785"/>
<rect x="209" y="157" width="2" height="2" fill="#1f9a8a"/>
<rect x="211" y="158" width="2" height="2" fill="#440154"/>
<rect x="211" y="160" width="2" height="2" fill="#440154"/>
<rect x="211" y="157" width="2" height="2" fill="#25838e"/>
<rect x="215" y="158" width="2" height="2" fill="#440154"/>
<rect x="217" y="158" width="2" height="2" fill="#440154"/>
<rect x="219" y="160" width="2" height="2" fill="#440154"/>
<rect x="221" y="158" width="2" height="2" fill="#440154"/>
<rect x="221" y="151" width="2" height="2" fill="#1fa088"/>
<rect x="223" y="158" width="2" height="2" fill="#440154"/>
<rect x="223" y="151" width="2" height="2" fill="#20a486"/>
<rect x="225" y="155" width="2" height="2" fill="#2ab07f"/>
<rect x="227" y="160" width="2" height="2" fill="#440154"/>
<rect x="229" y="158" width="2" height="2" fill="#440154"/>
<rect x="229" y="160" width="2" height="2" fill="#440154"/>
<rect x="229" y="153" width="2" height="2" fill="#1e9b8a"/>
<rect x="231" y="157" width="2" height="2" fill="#20a486"/>
<rect x="233" y="155" width="2" height="2" fill="#1f9e89"/>
<rect x="235" y="160" width="2" height="2" fill="#440154"/>
<rect x="235" y="151" width="2" height="2" fill="#1f988b"/>
<rect x="237" y="158" width="2" height="2" fill="#440154"/>
<rect x="237" y="160" width="2" height="2" fill="#440154"/>
<rect x="237" y="155" width="2" height="2" fill="#1fa187"/>
<rect x="239" y="158" width="2" height="2" fill="#440154"/>
<rect x="239" y="160" width="2" height="2" fill="#440154"/>
<rect x="239" y="151" width="2" height="2" fill="#23898e"/>
<rect x="241" y="158" width="2" height="2" fill="#440154"/>
<rect x="243" y="155" width="2" height="2" fill="#24868e"/>
<rect x="245" y="158" width="2" height="2" fill="#440154"/>
<rect x="245" y="160" width="2" height="2" fill="#440154"/>
<rect x="245" y="151" width="2" height="2" fill="#1e9d89"/>
<rect x="247" y="158" width="2" height="2" fill="#440154"/>
<rect x="249" y="158" width="2" height="2" fill="#440154"/>
<rect x="249" y="151" width="2" height="2" fill="#1f9a8a"/>
<rect x="251" y="158" width="2" height="2" fill="#440154"/>
<rect x="253" y="158" width="1" height="2" fill="#440154"/>
<rect x="253" y="160" width="1" height="2" fill="#440154"/>
<rect x="253" y="153" width="1" height="2" fill="#21908d"/>
<rect x="85" y="466" width="169" height="5" fill="#440154"/>
<rect x="91" y="470" width="2" height="2" fill="#2ab07f"/>
<rect x="109" y="466" width="2" height="2" fill="#20a386"/>
<rect x="109" y="468" width="2" height="2" fill="#1f988b"/>
<rect x="109" y="470" width="2" height="2" fill="#22a884"/>
<rect x="111" y="466" width="2" height="2" fill="#1f968b"/>
<rect x="111" y="468" width="2" height="2" fill="#2cb17e"/>
<rect x="113" y="470" width="2" height="2" fill="#1fa187"/>
<rect x="117" y="470" width="2" height="2" fill="#2cb17e"/>
<rect x="119" y="468" width="2" height="2" fill="#25848e"/>
<rect x="121" y="466" width="2" height="2" fill="#34b679"/>
<rect x="125" y="466" width="2" height="2" fill="#1fa287"/>
<rect x="125" y="468" width="2" height="2" fill="#1e9d89"/>
<rect x="127" y="468" width="2" height="2" fill="#20928c"/>
<rect x="133" y="470" width="2" height="2" fill="#218f8d"/>
<rect x="139" y="466" width="2" height="2" fill="#20a486"/>
<rect x="141" y="466" width="2" height="2" fill="#20a386"/>
<rect x="141" y="470" width="2" height="2" fill="#2eb37c"/>
<rect x="151" y="468" width="2" height="2" fill="#1f988b"/>
<rect x="157" y="468" width="2" height="2" fill="#1f988b"/>
<rect x="159" y="466" width="2" height="2" fill="#1fa088"/>
<rect x="173" y="466" width="2" height="2" fill="#22a785"/>
<rect x="185" y="466" width="2" height="2" fill="#1fa287"/>
<rect x="189" y="470" width="2" height="2" fill="#1e9b8a"/>
<rect x="191" y="470" width="2" height="2" fill="#24878e"/>
<rect x="195" y="468" width="2" height="2" fill="#25ab82"/>
<rect x="209" y="466" width="2" height="2" fill="#24868e"/>
<rect x="219" y="468" width="2" height="2" fill="#22a884"/>
<rect x="223" y="468" width="2" height="2" fill="#228c8d"/>
<rect x="231" y="468" width="2" height="2" fill="#1f948c"/>
<rect x="233" y="468" width="2" height="2" fill="#1f9a8a"/>
<rect x="233" y="470" width="2" height="2" fill="#25ab82"/>
<rect x="243" y="468" width="2" height="2" fill="#1fa188"/>
<rect x="251" y="470" width="2" height="2" fill="#26828e"/>
<rect x="85" y="464" width="2" height="2" fill="#440154"/>
<rect x="85" y="462" width="2" height="2" fill="#440154"/>
<rect x="85" y="460" width="2" height="2" fill="#440154"/>
<rect x="87" y="464" width="2" height="2" fill="#440154"/>
<rect x="87" y="462" width="2" height="2" fill="#440154"/>
<rect x="89" y="464" width="2" height="2" fill="#440154"/>
<rect x="89" y="462" width="2" height="2" fill="#440154"/>
<rect x="93" y="462" width="2" height="2" fill="#440154"/>
<rect x="95" y="462" width="2" height="2" fill="#440154"/>
<rect x="97" y="464" width="2" height="2" fill="#440154"/>
<rect x="97" y="462" width="2" height="2" fill="#440154"/>
<rect x="99" y="464" width="2" height="2" fill="#440154"/>
<rect x="99" y="462" width="2" height="2" fill="#440154"/>
<rect x="99" y="460" width="2" height="2" fill="#440154"/>
<rect x="101" y="462" width="2" height="2" fill="#440154"/>
<rect x="101" y="460" width="2" height="2" fill="#440154"/>
<rect x="103" y="462" width="2" height="2" fill="#440154"/>
<rect x="107" y="462" width="2" height="2" fill="#440154"/>
<rect x="109" y="462" width="2" height="2" fill="#440154"/>
<rect x="111" y="464" width="2" height="2" fill="#440154"/>
<rect x="111" y="462" width="2" height="2" fill="#440154"/>
<rect x="111" y="460" width="2" height="2" fill="#440154"/>
<rect x="113" y="464" width="2" height="2" fill="#440154"/>
<rect x="113" y="460" width="2" height="2" fill="#440154"/>
<rect x="115" y="464" width="2" height="2" fill="#440154"/>
<rect x="115" y="458" width="2" height="2" fill="#440154"/>
<rect x="119" y="462" width="2" height="2" fill="#440154"/>
<rect x="121" y="464" width="2" height="2" fill="#440154"/>
<rect x="121" y="458" width="2" height="2" fill="#440154"/>
<rect x="127" y="464" width="2" height="2" fill="#440154"/>
<rect x="129" y="462" width="2" height="2" fill="#440154"/>
<rect x="131" y="462" width="2" height="2" fill="#440154"/>
<rect x="133" y="464" width="2" height="2" fill="#440154"/>
<rect x="133" y="460" width="2" height="2" fill="#440154"/>
<rect x="135" y="464" width="2" height="2" fill="#440154"/>
<rect x="135" y="460" width="2" height="2" fill="#440154"/>
<rect x="139" y="464" width="2" height="2" fill="#440154"/>
<rect x="139" y="462" width="2" height="2" fill="#440154"/>
<rect x="141" y="462" width="2" height="2" fill="#440154"/>
<rect x="143" y="464" width="2" height="2" fill="#440154"/>
<rect x="143" y="462" width="2" height="2" fill="#440154"/>
<rect x="143" y="458" width="2" height="2" fill="#440154"/>
<rect x="145" y="464" width="2" height="2" fill="#440154"/>
<rect x="151" y="464" width="2" height="2" fill="#440154"/>
<rect x="153" y="464" width="2" height="2" fill="#440154"/>
<rect x="153" y="462" width="2" height="2" fill="#440154"/>
<rect x="153" y="460" width="2" height="2" fill="#440154"/>
<rect x="157" y="460" width="2" height="2" fill="#440154"/>
<rect x="159" y="464" width="2" height="2" fill="#440154"/>
<rect x="159" y="462" width="2" height="2" fill="#440154"/>
<rect x="161" y="462" width="2" height="2" fill="#440154"/>
<rect x="161" y="458" width="2" height="2" fill="#440154"/>
<rect x="163" y="464" width="2" height="2" fill="#440154"/>
<rect x="165" y="464" width="2" height="2" fill="#440154"/>
<rect x="165" y="462" width="2" height="2" fill="#440154"/>
<rect x="169" y="464" width="2" height="2" fill="#440154"/>
<rect x="169" y="460" width="2" height="2" fill="#440154"/>
<rect x="171" y="464" width="2" height="2" fill="#440154"/>
<rect x="171" y="462" width="2" height="2" fill="#440154"/>
<rect x="171" y="458" width="2" height="2" fill="#440154"/>
<rect x="173" y="462" width="2" height="2" fill="#440154"/>
<rect x="173" y="458" width="2" height="2" fill="#440154"/>
<rect x="175" y="464" width="2" height="2" fill="#440154"/>
<rect x="175" y="460" width="2" height="2" fill="#440154"/>
<rect x="177" y="464" width="2" height="2" fill="#440154"/>
<rect x="177" y="462" width="2" height="2" fill="#440154"/>
<rect x="179" y="460" width="2" height="2" fill="#440154"/>
<rect x="183" y="460" width="2" height="2" fill="#440154"/>
<rect x="183" y="458" width="2" height="2" fill="#440154"/>
<rect x="185" y="460" width="2" height="2" fill="#440154"/>
<rect x="187" y="462" width="2" height="2" fill="#440154"/>
<rect x="189" y="464" width="2" height="2" fill="#440154"/>
<rect x="189" y="462" width="2" height="2" fill="#440154"/>
<rect x="191" y="462" width="2" height="2" fill="#440154"/>
<rect x="197" y="464" width="2" height="2" fill="#440154"/>
<rect x="197" y="462" width="2" height="2" fill="#440154"/>
<rect x="199" y="462" width="2" height="2" fill="#440154"/>
<rect x="203" y="462" width="2" height="2" fill="#440154"/>
<rect x="205" y="460" width="2" height="2" fill="#440154"/>
<rect x="205" y="458" width="2" height="2" fill="#440154"/>
<rect x="207" y="464" width="2" height="2" fill="#440154"/>
<rect x="207" y="462" width="2" height="2" fill="#440154"/>
<rect x="209" y="462" width="2" height="2" fill="#440154"/>
<rect x="211" y="460" width="2" height="2" fill="#440154"/>
<rect x="215" y="464" width="2" height="2" fill="#440154"/>
<rect x="217" y="460" width="2" height="2" fill="#440154"/>
<rect x="219" y="460" width="2" height="2" fill="#440154"/>
<rect x="221" y="458" width="2" height="2" fill="#440154"/>
<rect x="223" y="460" width="2" height="2" fill="#440154"/>
<rect x="227" y="464" width="2" height="2" fill="#440154"/>
<rect x="227" y="462" width="2" height="2" fill="#440154"/>
<rect x="227" y="460" width="2" height="2" fill="#440154"/>
<rect x="229" y="462" width="2" height="2" fill="#440154"/>
<rect x="231" y="464" width="2" height="2" fill="#440154"/>
<rect x="231" y="462" width="2" height="2" fill="#440154"/>
<rect x="231" y="460" width="2" height="2" fill="#440154"/>
<rect x="233" y="464" width="2" height="2" fill="#440154"/>
<rect x="233" y="462" width="2" height="2" fill="#440154"/>
<rect x="235" y="464" width="2" height="2" fill="#440154"/>
<rect x="237" y="464" width="2" height="2" fill="#440154"/>
<rect x="237" y="462" width="2" height="2" fill="#440154"/>
<rect x="239" y="464" width="2" height="2" fill="#440154"/>
<rect x="239" y="460" width="2" height="2" fill="#440154"/>
<rect x="241" y="464" width="2" height="2" fill="#440154"/>
<rect x="243" y="462" width="2" height="2" fill="#440154"/>
<rect x="243" y="460" width="2" height="2" fill="#440154"/>
<rect x="245" y="464" width="2" height="2" fill="#440154"/>
<rect x="245" y="462" width="2" height="2" fill="#440154"/>
<rect x="245" y="460" width="2" height="2" fill="#440154"/>
<rect x="249" y="464" width="2" height="2" fill="#440154"/>
<rect x="249" y="458" width="2" height="2" fill="#440154"/>
<rect x="251" y="462" width="2" height="2" fill="#440154"/>
<rect x="85" y="312" width="2" height="2" fill="#440154"/>
<rect x="85" y="318" width="2" height="2" fill="#440154"/>
<rect x="87" y="312" width="2" height="2" fill="#440154"/>
<rect x="87" y="314" width="2" height="2" fill="#440154"/>
<rect x="87" y="316" width="2" height="2" fill="#440154"/>
<rect x="89" y="316" width="2" height="2" fill="#440154"/>
<rect x="91" y="314" width="2" height="2" fill="#440154"/>
<rect x="91" y="318" width="2" height="2" fill="#440154"/>
<rect x="93" y="312" width="2" height="2" fill="#440154"/>
<rect x="93" y="314" width="2" height="2" fill="#440154"/>
<rect x="95" y="312" width="2" height="2" fill="#440154"/>
<rect x="95" y="314" width="2" height="2" fill="#440154"/>
<rect x="95" y="316" width="2" height="2" fill="#440154"/>
<rect x="95" y="318" width="2" height="2" fill="#440154"/>
<rect x="97" y="314" width="2" height="2" fill="#440154"/>
<rect x="97" y="316" width="2" height="2" fill="#440154"/>
<rect x="99" y="312" width="2" height="2" fill="#440154"/>
<rect x="99" y="314" width="2" height="2" fill="#440154"/>
<rect x="99" y="316" width="2" height="2" fill="#440154"/>
<rect x="101" y="312" width="2" height="2" fill="#440154"/>
<rect x="101" y="314" width="2" height="2" fill="#440154"/>
<rect x="101" y="316" width="2" height="2" fill="#440154"/>
<rect x="101" y="318" width="2" height="2" fill="#440154"/>
<rect x="103" y="314" width="2" height="2" fill="#440154"/>
<rect x="105" y="314" width="2" height="2" fill="#440154"/>
<rect x="105" y="316" width="2" height="2" fill="#440154"/>
<rect x="105" y="318" width="2" height="2" fill="#440154"/>
<rect x="107" y="316" width="2" height="2" fill="#440154"/>
<rect x="109" y="316" width="2" height="2" fill="#440154"/>
<rect x="111" y="312" width="2" height="2" fill="#440154"/>
<rect x="111" y="314" width="2" height="2" fill="#440154"/>
<rect x="111" y="316" width="2" height="2" fill="#440154"/>
<rect x="113" y="314" width="2" height="2" fill="#440154"/>
<rect x="113" y="318" width="2" height="2" fill="#440154"/>
<rect x="115" y="314" width="2" height="2" fill="#440154"/>
<rect x="115" y="316" width="2" height="2" fill="#440154"/>
<rect x="117" y="314" width="2" height="2" fill="#440154"/>
<rect x="117" y="316" width="2" height="2" fill="#440154"/>
<rect x="119" y="314" width="2" height="2" fill="#440154"/>
<rect x="119" y="318" width="2" height="2" fill="#440154"/>
<rect x="121" y="314" width="2" height="2" fill="#440154"/>
<rect x="121" y="316" width="2" height="2" fill="#440154"/>
<rect x="123" y="312" width="2" height="2" fill="#440154"/>
<rect x="123" y="314" width="2" height="2" fill="#440154"/>
<rect x="123" y="316" width="2" height="2" fill="#440154"/>
<rect x="125" y="318" width="2" height="2" fill="#440154"/>
<rect x="125" y="320" width="2" height="2" fill="#440154"/>
<rect x="127" y="314" width="2" height="2" fill="#440154"/>
<rect x="127" y="316" width="2" height="2" fill="#440154"/>
<rect x="127" y="318" width="2" height="2" fill="#440154"/>
<rect x="129" y="312" width="2" height="2" fill="#440154"/>
<rect x="129" y="316" width="2" height="2" fill="#440154"/>
<rect x="129" y="318" width="2" height="2" fill="#440154"/>
<rect x="129" y="320" width="2" height="2" fill="#440154"/>
<rect x="131" y="314" width="2" height="2" fill="#440154"/>
<rect x="131" y="316" width="2" height="2" fill="#440154"/>
<rect x="133" y="312" width="2" height="2" fill="#440154"/>
<rect x="133" y="314" width="2" height="2" fill="#440154"/>
<rect x="133" y="316" width="2" height="2" fill="#440154"/>
<rect x="133" y="318" width="2" height="2" fill="#440154"/>
<rect x="135" y="314" width="2" height="2" fill="#440154"/>
<rect x="135" y="316" width="2" height="2" fill="#440154"/>
<rect x="135" y="318" width="2" height="2" fill="#440154"/>
<rect x="137" y="314" width="2" height="2" fill="#440154"/>
<rect x="137" y="316" width="2" height="2" fill="#440154"/>
<rect x="139" y="314" width="2" height="2" fill="#440154"/>
<rect x="139" y="316" width="2" height="2" fill="#440154"/>
<rect x="139" y="318" width="2" height="2" fill="#440154"/>
<rect x="141" y="314" width="2" height="2" fill="#440154"/>
<rect x="141" y="316" width="2" height="2" fill="#440154"/>
<rect x="143" y="316" width="2" height="2" fill="#440154"/>
<rect x="143" y="318" width="2" height="2" fill="#440154"/>
<rect x="145" y="316" width="2" height="2" fill="#440154"/>
<rect x="145" y="318" width="2" height="2" fill="#440154"/>
<rect x="147" y="312" width="2" height="2" fill="#440154"/>
<rect x="147" y="314" width="2" height="2" fill="#440154"/>
<rect x="147" y="316" width="2" height="2" fill="#440154"/>
<rect x="147" y="318" width="2" height="2" fill="#440154"/>
<rect x="149" y="312" width="2" height="2" fill="#440154"/>
<rect x="149" y="314" width="2" height="2" fill="#440154"/>
<rect x="149" y="316" width="2" height="2" fill="#440154"/>
<rect x="151" y="312" width="2" height="2" fill="#440154"/>
<rect x="151" y="314" width="2" height="2" fill="#440154"/>
<rect x="151" y="316" width="2" height="2" fill="#440154"/>
<rect x="151" y="318" width="2" height="2" fill="#440154"/>
<rect x="153" y="312" width="2" height="2" fill="#440154"/>
<rect x="153" y="314" width="2" height="2" fill="#440154"/>
<rect x="153" y="316" width="2" height="2" fill="#440154"/>
<rect x="153" y="318" width="2" height="2" fill="#440154"/>
<rect x="153" y="320" width="2" height="2" fill="#440154"/>
<rect x="155" y="312" width="2" height="2" fill="#440154"/>
<rect x="155" y="314" width="2" height="2" fill="#440154"/>
<rect x="155" y="316" width="2" height="2" fill="#440154"/>
<rect x="155" y="318" width="2" height="2" fill="#440154"/>
<rect x="157" y="310" width="2" height="2" fill="#440154"/>
<rect x="157" y="312" width="2" height="2" fill="#440154"/>
<rect x="157" y="314" width="2" height="2" fill="#440154"/>
<rect x="157" y="316" width="2" height="2" fill="#440154"/>
<rect x="157" y="318" width="2" height="2" fill="#440154"/>
<rect x="159" y="312" width="2" height="2" fill="#440154"/>
<rect x="159" y="314" width="2" height="2" fill="#440154"/>
<rect x="159" y="316" width="2" height="2" fill="#440154"/>
<rect x="161" y="310" width="2" height="2" fill="#440154"/>
<rect x="161" y="312" width="2" height="2" fill="#440154"/>
<rect x="161" y="314" width="2" height="2" fill="#440154"/>
<rect x="161" y="316" width="2" height="2" fill="#440154"/>
<rect x="161" y="318" width="2" height="2" fill="#440154"/>
<rect x="161" y="320" width="2" height="2" fill="#440154"/>
<rect x="163" y="312" width="2" height="2" fill="#440154"/>
<rect x="163" y="314" width="2" height="2" fill="#440154"/>
<rect x="163" y="318" width="2" height="2" fill="#440154"/>
<rect x="165" y="312" width="2" height="2" fill="#440154"/>
<rect x="165" y="318" width="2" height="2" fill="#440154"/>
<rect x="167" y="312" width="2" height="2" fill="#440154"/>
<rect x="167" y="314" width="2" height="2" fill="#440154"/>
<rect x="167" y="318" width="2" height="2" fill="#440154"/>
<rect x="167" y="322" width="2" height="2" fill="#440154"/>
<rect x="169" y="310" width="2" height="2" fill="#440154"/>
<rect x="169" y="322" width="2" height="2" fill="#440154"/>
<rect x="171" y="314" width="2" height="2" fill="#440154"/>
<rect x="171" y="316" width="2" height="2" fill="#440154"/>
<rect x="171" y="318" width="2" height="2" fill="#440154"/>
<rect x="173" y="308" width="2" height="2" fill="#440154"/>
<rect x="173" y="310" width="2" height="2" fill="#440154"/>
<rect x="173" y="312" width="2" height="2" fill="#440154"/>
<rect x="173" y="314" width="2" height="2" fill="#440154"/>
<rect x="173" y="316" width="2" height="2" fill="#440154"/>
<rect x="175" y="316" width="2" height="2" fill="#440154"/>
<rect x="175" y="318" width="2" height="2" fill="#440154"/>
<rect x="175" y="320" width="2" height="2" fill="#440154"/>
<rect x="177" y="308" width="2" height="2" fill="#440154"/>
<rect x="177" y="310" width="2" height="2" fill="#440154"/>
<rect x="177" y="314" width="2" height="2" fill="#440154"/>
<rect x="177" y="316" width="2" height="2" fill="#440154"/>
<rect x="177" y="318" width="2" height="2" fill="#440154"/>
<rect x="179" y="308" width="2" height="2" fill="#440154"/>
<rect x="179" y="310" width="2" height="2" fill="#440154"/>
<rect x="179" y="312" width="2" height="2" fill="#440154"/>
<rect x="179" y="314" width="2" height="2" fill="#440154"/>
<rect x="179" y="316" width="2" height="2" fill="#440154"/>
<rect x="179" y="322" width="2" height="2" fill="#440154"/>
<rect x="181" y="310" width="2" height="2" fill="#440154"/>
<rect x="181" y="312" width="2" height="2" fill="#440154"/>
<rect x="181" y="314" width="2" height="2" fill="#440154"/>
<rect x="181" y="316" width="2" height="2" fill="#440154"/>
<rect x="181" y="318" width="2" height="2" fill="#440154"/>
<rect x="181" y="322" width="2" height="2" fill="#440154"/>
<rect x="183" y="308" width="2" height="2" fill="#440154"/>
<rect x="183" y="310" width="2" height="2" fill="#440154"/>
<rect x="183" y="312" width="2" height="2" fill="#440154"/>
<rect x="183" y="316" width="2" height="2" fill="#440154"/>
<rect x="183" y="318" width="2" height="2" fill="#440154"/>
<rect x="183" y="322" width="2" height="2" fill="#440154"/>
<rect x="185" y="310" width="2" height="2" fill="#440154"/>
<rect x="185" y="312" width="2" height="2" fill="#440154"/>
<rect x="185" y="314" width="2" height="2" fill="#440154"/>
<rect x="185" y="316" width="2" height="2" fill="#440154"/>
<rect x="185" y="318" width="2" height="2" fill="#440154"/>
<rect x="185" y="320" width="2" height="2" fill="#440154"/>
<rect x="185" y="322" width="2" height="2" fill="#440154"/>
<rect x="187" y="310" width="2" height="2" fill="#440154"/>
<rect x="187" y="312" width="2" height="2" fill="#440154"/>
<rect x="187" y="314" width="2" height="2" fill="#440154"/>
<rect x="187" y="316" width="2" height="2" fill="#440154"/>
<rect x="187" y="320" width="2" height="2" fill="#440154"/>
<rect x="189" y="308" width="2" height="2" fill="#440154"/>
<rect x="189" y="312" width="2" height="2" fill="#440154"/>
<rect x="189" y="314" width="2" height="2" fill="#440154"/>
<rect x="189" y="316" width="2" height="2" fill="#440154"/>
<rect x="189" y="318" width="2" height="2" fill="#440154"/>
<rect x="191" y="306" width="2" height="2" fill="#440154"/>
<rect x="191" y="308" width="2" height="2" fill="#440154"/>
<rect x="191" y="310" width="2" height="2" fill="#440154"/>
<rect x="191" y="312" width="2" height="2" fill="#440154"/>
<rect x="191" y="314" width="2" height="2" fill="#440154"/>
<rect x="191" y="316" width="2" height="2" fill="#440154"/>
<rect x="191" y="320" width="2" height="2" fill="#440154"/>
<rect x="191" y="322" width="2" height="2" fill="#440154"/>
<rect x="193" y="308" width="2" height="2" fill="#440154"/>
<rect x="193" y="310" width="2" height="2" fill="#440154"/>
<rect x="193" y="312" width="2" height="2" fill="#440154"/>
<rect x="193" y="318" width="2" height="2" fill="#440154"/>
<rect x="193" y="320" width="2" height="2" fill="#440154"/>
<rect x="195" y="308" width="2" height="2" fill="#440154"/>
<rect x="195" y="312" width="2" height="2" fill="#440154"/>
<rect x="195" y="316" width="2" height="2" fill="#440154"/>
<rect x="195" y="320" width="2" height="2" fill="#440154"/>
<rect x="197" y="308" width="2" height="2" fill="#440154"/>
<rect x="197" y="312" width="2" height="2" fill="#440154"/>
<rect x="197" y="314" width="2" height="2" fill="#440154"/>
<rect x="197" y="320" width="2" height="2" fill="#440154"/>
<rect x="199" y="308" width="2" height="2" fill="#440154"/>
<rect x="199" y="310" width="2" height="2" fill="#440154"/>
<rect x="199" y="312" width="2" height="2" fill="#440154"/>
<rect x="199" y="314" width="2" height="2" fill="#440154"/>
<rect x="199" y="316" width="2" height="2" fill="#440154"/>
<rect x="199" y="318" width="2" height="2" fill="#440154"/>
<rect x="199" y="320" width="2" height="2" fill="#440154"/>
<rect x="201" y="308" width="2" height="2" fill="#440154"/>
<rect x="201" y="310" width="2" height="2" fill="#440154"/>
<rect x="201" y="312" width="2" height="2" fill="#440154"/>
<rect x="201" y="314" width="2" height="2" fill="#440154"/>
<rect x="201" y="316" width="2" height="2" fill="#440154"/>
<rect x="201" y="318" width="2" height="2" fill="#440154"/>
<rect x="201" y="320" width="2" height="2" fill="#440154"/>
<rect x="201" y="322" width="2" height="2" fill="#440154"/>
<rect x="203" y="308" width="2" height="2" fill="#440154"/>
<rect x="203" y="316" width="2" height="2" fill="#440154"/>
<rect x="203" y="318" width="2" height="2" fill="#440154"/>
<rect x="203" y="322" width="2" height="2" fill="#440154"/>
<rect x="205" y="306" width="2" height="2" fill="#440154"/>
<rect x="205" y="308" width="2" height="2" fill="#440154"/>
<rect x="205" y="310" width="2" height="2" fill="#440154"/>
<rect x="205" y="314" width="2" height="2" fill="#440154"/>
<rect x="205" y="316" width="2" height="2" fill="#440154"/>
<rect x="205" y="320" width="2" height="2" fill="#440154"/>
<rect x="207" y="308" width="2" height="2" fill="#440154"/>
<rect x="207" y="310" width="2" height="2" fill="#440154"/>
<rect x="207" y="312" width="2" height="2" fill="#440154"/>
<rect x="207" y="314" width="2" height="2" fill="#440154"/>
<rect x="207" y="318" width="2" height="2" fill="#440154"/>
<rect x="207" y="320" width="2" height="2" fill="#440154"/>
<rect x="207" y="322" width="2" height="2" fill="#440154"/>
<rect x="209" y="308" width="2" height="2" fill="#440154"/>
<rect x="209" y="310" width="2" height="2" fill="#440154"/>
<rect x="209" y="312" width="2" height="2" fill="#440154"/>
<rect x="209" y="318" width="2" height="2" fill="#440154"/>
<rect x="209" y="320" width="2" height="2" fill="#440154"/>
<rect x="211" y="306" width="2" height="2" fill="#440154"/>
<rect x="211" y="310" width="2" height="2" fill="#440154"/>
<rect x="211" y="312" width="2" height="2" fill="#440154"/>
<rect x="211" y="318" width="2" height="2" fill="#440154"/>
<rect x="211" y="320" width="2" height="2" fill="#440154"/>
<rect x="213" y="310" width="2" height="2" fill="#440154"/>
<rect x="213" y="312" width="2" height="2" fill="#440154"/>
<rect x="213" y="314" width="2" height="2" fill="#440154"/>
<rect x="213" y="316" width="2" height="2" fill="#440154"/>
<rect x="213" y="318" width="2" height="2" fill="#440154"/>
<rect x="213" y="320" width="2" height="2" fill="#440154"/>
<rect x="213" y="322" width="2" height="2" fill="#440154"/>
<rect x="215" y="306" width="2" height="2" fill="#440154"/>
<rect x="215" y="310" width="2" height="2" fill="#440154"/>
<rect x="215" y="312" width="2" height="2" fill="#440154"/>
<rect x="215" y="314" width="2" height="2" fill="#440154"/>
<rect x="215" y="318" width="2" height="2" fill="#440154"/>
<rect x="215" y="320" width="2" height="2" fill="#440154"/>
<rect x="215" y="322" width="2" height="2" fill="#440154"/>
<rect x="217" y="306" width="2" height="2" fill="#440154"/>
<rect x="217" y="308" width="2" height="2" fill="#440154"/>
<rect x="217" y="310" width="2" height="2" fill="#440154"/>
<rect x="217" y="312" width="2" height="2" fill="#440154"/>
<rect x="217" y="314" width="2" height="2" fill="#440154"/>
<rect x="217" y="316" width="2" height="2" fill="#440154"/>
<rect x="217" y="318" width="2" height="2" fill="#440154"/>
<rect x="217" y="320" width="2" height="2" fill="#440154"/>
<rect x="219" y="306" width="2" height="2" fill="#440154"/>
<rect x="219" y="308" width="2" height="2" fill="#440154"/>
<rect x="219" y="310" width="2" height="2" fill="#440154"/>
<rect x="219" y="312" width="2" height="2" fill="#440154"/>
<rect x="219" y="314" width="2" height="2" fill="#440154"/>
<rect x="219" y="316" width="2" height="2" fill="#440154"/>
<rect x="219" y="318" width="2" height="2" fill="#440154"/>
<rect x="221" y="304" width="2" height="2" fill="#440154"/>
<rect x="221" y="306" width="2" height="2" fill="#440154"/>
<rect x="221" y="308" width="2" height="2" fill="#440154"/>
<rect x="221" y="310" width="2" height="2" fill="#440154"/>
<rect x="221" y="312" width="2" height="2" fill="#440154"/>
<rect x="221" y="314" width="2" height="2" fill="#440154"/>
<rect x="221" y="316" width="2" height="2" fill="#440154"/>
<rect x="221" y="318" width="2" height="2" fill="#440154"/>
<rect x="221" y="320" width="2" height="2" fill="#440154"/>
<rect x="223" y="306" width="2" height="2" fill="#440154"/>
<rect x="223" y="308" width="2" height="2" fill="#440154"/>
<rect x="223" y="310" width="2" height="2" fill="#440154"/>
<rect x="223" y="314" width="2" height="2" fill="#440154"/>
<rect x="223" y="318" width="2" height="2" fill="#440154"/>
<rect x="223" y="320" width="2" height="2" fill="#440154"/>
<rect x="223" y="322" width="2" height="2" fill="#440154"/>
<rect x="223" y="324" width="2" height="2" fill="#440154"/>
<rect x="225" y="308" width="2" height="2" fill="#440154"/>
<rect x="225" y="314" width="2" height="2" fill="#440154"/>
<rect x="225" y="316" width="2" height="2" fill="#440154"/>
<rect x="225" y="320" width="2" height="2" fill="#440154"/>
<rect x="225" y="324" width="2" height="2" fill="#440154"/>
<rect x="227" y="306" width="2" height="2" fill="#440154"/>
<rect x="227" y="308" width="2" height="2" fill="#440154"/>
<rect x="227" y="310" width="2" height="2" fill="#440154"/>
<rect x="227" y="314" width="2" height="2" fill="#440154"/>
<rect x="227" y="318" width="2" height="2" fill="#440154"/>
<rect x="227" y="320" width="2" height="2" fill="#440154"/>
<rect x="227" y="324" width="2" height="2" fill="#440154"/>
<rect x="229" y="306" width="2" height="2" fill="#440154"/>
<rect x="229" y="308" width="2" height="2" fill="#440154"/>
<rect x="229" y="310" width="2" height="2" fill="#440154"/>
<rect x="229" y="312" width="2" height="2" fill="#440154"/>
<rect x="229" y="314" width="2" height="2" fill="#440154"/>
<rect x="229" y="316" width="2" height="2" fill="#440154"/>
<rect x="229" y="318" width="2" height="2" fill="#440154"/>
<rect x="229" y="320" width="2" height="2" fill="#440154"/>
<rect x="231" y="304" width="2" height="2" fill="#440154"/>
<rect x="231" y="306" width="2" height="2" fill="#440154"/>
<rect x="231" y="308" width="2" height="2" fill="#440154"/>
<rect x="231" y="310" width="2" height="2" fill="#440154"/>
<rect x="231" y="312" width="2" height="2" fill="#440154"/>
<rect x="231" y="314" width="2" height="2" fill="#440154"/>
<rect x="231" y="316" width="2" height="2" fill="#440154"/>
<rect x="231" y="318" width="2" height="2" fill="#440154"/>
<rect x="231" y="320" width="2" height="2" fill="#440154"/>
<rect x="231" y="322" width="2" height="2" fill="#440154"/>
<rect x="231" y="324" width="2" height="2" fill="#440154"/>
<rect x="233" y="306" width="2" height="2" fill="#440154"/>
<rect x="233" y="308" width="2" height="2" fill="#440154"/>
<rect x="233" y="314" width="2" height="2" fill="#440154"/>
<rect x="233" y="316" width="2" height="2" fill="#440154"/>
<rect x="233" y="318" width="2" height="2" fill="#440154"/>
<rect x="233" y="320" width="2" height="2" fill="#440154"/>
<rect x="233" y="324" width="2" height="2" fill="#440154"/>
<rect x="235" y="306" width="2" height="2" fill="#440154"/>
<rect x="235" y="308" width="2" height="2" fill="#440154"/>
<rect x="235" y="310" width="2" height="2" fill="#440154"/>
<rect x="235" y="312" width="2" height="2" fill="#440154"/>
<rect x="235" y="314" width="2" height="2" fill="#440154"/>
<rect x="235" y="316" width="2" height="2" fill="#440154"/>
<rect x="235" y="320" width="2" height="2" fill="#440154"/>
<rect x="235" y="322" width="2" height="2" fill="#440154"/>
<rect x="235" y="324" width="2" height="2" fill="#440154"/>
<rect x="237" y="306" width="2" height="2" fill="#440154"/>
<rect x="237" y="310" width="2" height="2" fill="#440154"/>
<rect x="237" y="312" width="2" height="2" fill="#440154"/>
<rect x="237" y="314" width="2" height="2" fill="#440154"/>
<rect x="237" y="316" width="2" height="2" fill="#440154"/>
<rect x="237" y="318" width="2" height="2" fill="#440154"/>
<rect x="237" y="320" width="2" height="2" fill="#440154"/>
<rect x="237" y="322" width="2" height="2" fill="#440154"/>
<rect x="239" y="306" width="2" height="2" fill="#440154"/>
<rect x="239" y="308" width="2" height="2" fill="#440154"/>
<rect x="239" y="310" width="2" height="2" fill="#440154"/>
<rect x="239" y="314" width="2" height="2" fill="#440154"/>
<rect x="239" y="316" width="2" height="2" fill="#440154"/>
<rect x="239" y="318" width="2" height="2" fill="#440154"/>
<rect x="239" y="320" width="2" height="2" fill="#440154"/>
<rect x="239" y="322" width="2" height="2" fill="#440154"/>
<rect x="241" y="304" width="2" height="2" fill="#440154"/>
<rect x="241" y="306" width="2" height="2" fill="#440154"/>
<rect x="241" y="308" width="2" height="2" fill="#440154"/>
<rect x="241" y="310" width="2" height="2" fill="#440154"/>
<rect x="241" y="312" width="2" height="2" fill="#440154"/>
<rect x="241" y="314" width="2" height="2" fill="#440154"/>
<rect x="241" y="316" width="2" height="2" fill="#440154"/>
<rect x="241" y="318" width="2" height="2" fill="#440154"/>
<rect x="241" y="322" width="2" height="2" fill="#440154"/>
<rect x="243" y="306" width="2" height="2" fill="#440154"/>
<rect x="243" y="308" width="2" height="2" fill="#440154"/>
<rect x="243" y="310" width="2" height="2" fill="#440154"/>
<rect x="243" y="312" width="2" height="2" fill="#440154"/>
<rect x="243" y="314" width="2" height="2" fill="#440154"/>
<rect x="243" y="316" width="2" height="2" fill="#440154"/>
<rect x="243" y="318" width="2" height="2" fill="#440154"/>
<rect x="243" y="320" width="2" height="2" fill="#440154"/>
<rect x="243" y="322" width="2" height="2" fill="#440154"/>
<rect x="243" y="324" width="2" height="2" fill="#440154"/>
<rect x="245" y="306" width="2" height="2" fill="#440154"/>
<rect x="245" y="308" width="2" height="2" fill="#440154"/>
<rect x="245" y="310" width="2" height="2" fill="#440154"/>
<rect x="245" y="312" width="2" height="2" fill="#440154"/>
<rect x="245" y="316" width="2" height="2" fill="#440154"/>
<rect x="245" y="318" width="2" height="2" fill="#440154"/>
<rect x="245" y="320" width="2" height="2" fill="#440154"/>
<rect x="245" y="322" width="2" height="2" fill="#440154"/>
<rect x="245" y="324" width="2" height="2" fill="#440154"/>
<rect x="247" y="304" width="2" height="2" fill="#440154"/>
<rect x="247" y="306" width="2" height="2" fill="#440154"/>
<rect x="247" y="308" width="2" height="2" fill="#440154"/>
<rect x="247" y="310" width="2" height="2" fill="#440154"/>
<rect x="247" y="312" width="2" height="2" fill="#440154"/>
<rect x="247" y="314" width="2" height="2" fill="#440154"/>
<rect x="247" y="316" width="2" height="2" fill="#440154"/>
<rect x="247" y="320" width="2" height="2" fill="#440154"/>
<rect x="247" y="322" width="2" height="2" fill="#440154"/>
<rect x="247" y="324" width="2" height="2" fill="#440154"/>
<rect x="249" y="306" width="2" height="2" fill="#440154"/>
<rect x="249" y="308" width="2" height="2" fill="#440154"/>
<rect x="249" y="310" width="2" height="2" fill="#440154"/>
<rect x="249" y="314" width="2" height="2" fill="#440154"/>
<rect x="249" y="316" width="2" height="2" fill="#440154"/>
<rect x="249" y="318" width="2" height="2" fill="#440154"/>
<rect x="249" y="322" width="2" height="2" fill="#440154"/>
<rect x="249" y="324" width="2" height="2" fill="#440154"/>
<rect x="251" y="304" width="2" height="2" fill="#440154"/>
<rect x="251" y="306" width="2" height="2" fill="#440154"/>
<rect x="251" y="310" width="2" height="2" fill="#440154"/>
<rect x="251" y="314" width="2" height="2" fill="#440154"/>
<rect x="251" y="316" width="2" height="2" fill="#440154"/>
<rect x="251" y="318" width="2" height="2" fill="#440154"/>
<rect x="251" y="320" width="2" height="2" fill="#440154"/>
<rect x="251" y="322" width="2" height="2" fill="#440154"/>
<rect x="253" y="304" width="2" height="2" fill="#440154"/>
<rect x="253" y="306" width="2" height="2" fill="#440154"/>
<rect x="253" y="310" width="2" height="2" fill="#440154"/>
<rect x="253" y="314" width="2" height="2" fill="#440154"/>
<rect x="253" y="316" width="2" height="2" fill="#440154"/>
<rect x="253" y="320" width="2" height="2" fill="#440154"/>
<rect x="253" y="322" width="2" height="2" fill="#440154"/>
<rect x="253" y="324" width="2" height="2" fill="#440154"/>
<rect x="137" y="385" width="2" height="2" fill="#440154"/>
<rect x="215" y="231" width="2" height="2" fill="#440154"/>
<rect x="209" y="263" width="2" height="2" fill="#440154"/>
<rect x="95" y="453" width="2" height="2" fill="#440154"/>
<rect x="151" y="255" width="2" height="2" fill="#440154"/>
<rect x="223" y="249" width="2" height="2" fill="#440154"/>
<rect x="247" y="287" width="2" height="2" fill="#440154"/>
<rect x="223" y="299" width="2" height="2" fill="#440154"/>
<rect x="147" y="197" width="2" height="2" fill="#440154"/>
<rect x="127" y="349" width="2" height="2" fill="#440154"/>
<rect x="173" y="377" width="2" height="2" fill="#440154"/>
<rect x="107" y="269" width="2" height="2" fill="#440154"/>
<rect x="247" y="325" width="2" height="2" fill="#440154"/>
<rect x="119" y="235" width="2" height="2" fill="#440154"/>
<rect x="209" y="413" width="2" height="2" fill="#440154"/>
<rect x="145" y="289" width="2" height="2" fill="#440154"/>
<rect x="85" y="429" width="2" height="2" fill="#440154"/>
<rect x="197" y="235" width="2" height="2" fill="#440154"/>
<rect x="249" y="345" width="2" height="2" fill="#440154"/>
<rect x="161" y="235" width="2" height="2" fill="#440154"/>
<rect x="121" y="455" width="2" height="2" fill="#440154"/>
<rect x="145" y="337" width="2" height="2" fill="#440154"/>
<rect x="245" y="227" width="2" height="2" fill="#440154"/>
<rect x="225" y="383" width="2" height="2" fill="#440154"/>
<rect x="127" y="245" width="2" height="2" fill="#440154"/>
<rect x="237" y="403" width="2" height="2" fill="#440154"/>
<rect x="187" y="271" width="2" height="2" fill="#440154"/>
<rect x="113" y="315" width="2" height="2" fill="#440154"/>
<rect x="254" y="151" width="3" height="320" fill="#f6e620"/>
<rect x="257" y="151" width="3" height="320" fill="#ece51b"/>
<rect x="260" y="151" width="3" height="320" fill="#f6e620"/>
<rect x="263" y="151" width="3" height="320" fill="#efe51c"/>
<rect x="266" y="151" width="3" height="320" fill="#f8e621"/>
<rect x="269" y="151" width="3" height="320" fill="#e7e419"/>
<rect x="272" y="151" width="3" height="320" fill="#f8e621"/>
<rect x="275" y="151" width="3" height="320" fill="#f1e51d"/>
<rect x="278" y="151" width="3" height="320" fill="#f6e620"/>
<rect x="281" y="151" width="3" height="320" fill="#ece51b"/>
<rect x="284" y="151" width="3" height="320" fill="#fbe723"/>
<rect x="287" y="151" width="3" height="320" fill="#eae51a"/>
<rect x="290" y="151" width="3" height="320" fill="#fbe723"/>
<rect x="293" y="151" width="3" height="320" fill="#e7e419"/>
<rect x="296" y="151" width="3" height="320" fill="#f8e621"/>
<rect x="299" y="151" width="3" height="320" fill="#f1e51d"/>
<rect x="302" y="151" width="3" height="320" fill="#fbe723"/>
<rect x="305" y="151" width="3" height="320" fill="#efe51c"/>
<rect x="308" y="151" width="3" height="320" fill="#f8e621"/>
<rect x="311" y="151" width="3" height="320" fill="#efe51c"/>
<rect x="314" y="151" width="3" height="320" fill="#f8e621"/>
<rect x="317" y="151" width="3" height="320" fill="#ece51b"/>
<rect x="320" y="151" width="3" height="320" fill="#fde725"/>
<rect x="323" y="151" width="3" height="320" fill="#ece51b"/>
<rect x="326" y="151" width="3" height="320" fill="#fde725"/>
<rect x="329" y="151" width="3" height="320" fill="#eae51a"/>
<rect x="332" y="151" width="3" height="320" fill="#f8e621"/>
<rect x="335" y="151" width="3" height="320" fill="#e7e419"/>
<rect x="338" y="151" width="3" height="320" fill="#f8e621"/>
<rect x="341" y="151" width="3" height="320" fill="#ece51b"/>
<rect x="344" y="151" width="3" height="320" fill="#fbe723"/>
<rect x="347" y="151" width="3" height="320" fill="#efe51c"/>
<rect x="350" y="151" width="3" height="320" fill="#fbe723"/>
<rect x="353" y="151" width="3" height="320" fill="#e7e419"/>
<rect x="356" y="151" width="3" height="320" fill="#fde725"/>
<rect x="359" y="151" width="3" height="320" fill="#e7e419"/>
<rect x="362" y="151" width="3" height="320" fill="#f8e621"/>
<rect x="365" y="151" width="3" height="320" fill="#e7e419"/>
<rect x="368" y="151" width="3" height="320" fill="#f8e621"/>
<rect x="371" y="151" width="3" height="320" fill="#f1e51d"/>
<rect x="374" y="151" width="3" height="320" fill="#fbe723"/>
<rect x="377" y="151" width="3" height="320" fill="#efe51c"/>
<rect x="380" y="151" width="3" height="320" fill="#fbe723"/>
<rect x="383" y="151" width="3" height="320" fill="#e7e419"/>
<rect x="386" y="151" width="3" height="320" fill="#fbe723"/>
<rect x="389" y="151" width="3" height="320" fill="#eae51a"/>
<rect x="392" y="151" width="3" height="320" fill="#fbe723"/>
<rect x="395" y="151" width="3" height="320" fill="#eae51a"/>
<rect x="398" y="151" width="3" height="320" fill="#fbe723"/>
<rect x="401" y="151" width="3" height="320" fill="#eae51a"/>
<rect x="404" y="151" width="3" height="320" fill="#f8e621"/>
<rect x="407" y="151" width="3" height="320" fill="#e7e419"/>
<rect x="410" y="151" width="3" height="320" fill="#fde725"/>
<defs>
<pattern id="tex2" x="254" y="287" width="48" height="48" patternUnits="userSpaceOnUse">
<rect width="48" height="48" fill="#37b878"/>
<rect x="0" y="0" width="2" height="2" fill="#3bbb75"/>
<rect x="2" y="0" width="2" height="2" fill="#2fb47c"/>
<rect x="4" y="0" width="2" height="2" fill="#3bbb75"/>
<rect x="8" y="0" width="2" height="2" fill="#40bd72"/>
<rect x="10" y="0" width="2" height="2" fill="#24aa83"/>
<rect x="12" y="0" width="2" height="2" fill="#44bf70"/>
<rect x="16" y="0" width="2" height="2" fill="#3fbc73"/>
<rect x="20" y="0" width="2" height="2" fill="#28ae80"/>
<rect x="22" y="0" width="2" height="2" fill="#40bd72"/>
<rect x="24" y="0" width="2" height="2" fill="#48c16e"/>
<rect x="34" y="0" width="2" height="2" fill="#3dbc74"/>
<rect x="36" y="0" width="2" height="2" fill="#2fb47c"/>
<rect x="38" y="0" width="2" height="2" fill="#2eb37c"/>
<rect x="40" y="0" width="2" height="2" fill="#52c569"/>
<rect x="44" y="0" width="2" height="2" fill="#2fb47c"/>
<rect x="4" y="2" width="2" height="2" fill="#28ae80"/>
<rect x="6" y="2" width="2" height="2" fill="#2ab07f"/>
<rect x="8" y="2" width="2" height="2" fill="#31b57b"/>
<rect x="16" y="2" width="2" height="2" fill="#31b57b"/>
<rect x="18" y="2" width="2" height="2" fill="#24aa83"/>
<rect x="24" y="2" width="2" height="2" fill="#3fbc73"/>
<rect x="30" y="2" width="2" height="2" fill="#2db27d"/>
<rect x="32" y="2" width="2" height="2" fill="#50c46a"/>
<rect x="36" y="2" width="2" height="2" fill="#31b57b"/>
<rect x="38" y="2" width="2" height="2" fill="#2ab07f"/>
<rect x="40" y="2" width="2" height="2" fill="#2ab07f"/>
<rect x="44" y="2" width="2" height="2" fill="#2cb17e"/>
<rect x="0" y="4" width="2" height="2" fill="#29af7f"/>
<rect x="4" y="4" width="2" height="2" fill="#3dbc74"/>
<rect x="6" y="4" width="2" height="2" fill="#40bd72"/>
<rect x="12" y="4" width="2" height="2" fill="#3fbc73"/>
<rect x="14" y="4" width="2" height="2" fill="#28ae80"/>
<rect x="16" y="4" width="2" height="2" fill="#2fb47c"/>
<rect x="18" y="4" width="2" height="2" fill="#48c16e"/>
<rect x="20" y="4" width="2" height="2" fill="#2db27d"/>
<rect x="22" y="4" width="2" height="2" fill="#32b67a"/>
<rect x="24" y="4" width="2" height="2" fill="#2cb17e"/>
<rect x="26" y="4" width="2" height="2" fill="#44bf70"/>
<rect x="28" y="4" width="2" height="2" fill="#48c16e"/>
<rect x="30" y="4" width="2" height="2" fill="#4cc26c"/>
<rect x="32" y="4" width="2" height="2" fill="#28ae80"/>
<rect x="36" y="4" width="2" height="2" fill="#3bbb75"/>
<rect x="38" y="4" width="2" height="2" fill="#31b57b"/>
<rect x="42" y="4" width="2" height="2" fill="#27ad81"/>
<rect x="44" y="4" width="2" height="2" fill="#40bd72"/>
<rect x="46" y="4" width="2" height="2" fill="#44bf70"/>
<rect x="0" y="6" width="2" height="2" fill="#23a983"/>
<rect x="2" y="6" width="2" height="2" fill="#2eb37c"/>
<rect x="4" y="6" width="2" height="2" fill="#31b57b"/>
<rect x="6" y="6" width="2" height="2" fill="#3dbc74"/>
<rect x="8" y="6" width="2" height="2" fill="#2eb37c"/>
<rect x="14" y="6" width="2" height="2" fill="#5cc863"/>
<rect x="16" y="6" width="2" height="2" fill="#3dbc74"/>
<rect x="18" y="6" width="2" height="2" fill="#4cc26c"/>
<rect x="22" y="6" width="2" height="2" fill="#50c46a"/>
<rect x="26" y="6" width="2" height="2" fill="#31b57b"/>
<rect x="28" y="6" width="2" height="2" fill="#2eb37c"/>
<rect x="30" y="6" width="2" height="2" fill="#28ae80"/>
<rect x="34" y="6" width="2" height="2" fill="#44bf70"/>
<rect x="36" y="6" width="2" height="2" fill="#28ae80"/>
<rect x="42" y="6" width="2" height="2" fill="#23a983"/>
<rect x="44" y="6" width="2" height="2" fill="#25ac82"/>
<rect x="46" y="6" width="2" height="2" fill="#2eb37c"/>
<rect x="0" y="8" width="2" height="2" fill="#2eb37c"/>
<rect x="2" y="8" width="2" height="2" fill="#27ad81"/>
<rect x="4" y="8" width="2" height="2" fill="#40bd72"/>
<rect x="6" y="8" width="2" height="2" fill="#42be71"/>
<rect x="8" y="8" width="2" height="2" fill="#25ab82"/>
<rect x="12" y="8" width="2" height="2" fill="#48c16e"/>
<rect x="14" y="8" width="2" height="2" fill="#32b67a"/>
<rect x="16" y="8" width="2" height="2" fill="#46c06f"/>
<rect x="20" y="8" width="2" height="2" fill="#28ae80"/>
<rect x="24" y="8" width="2" height="2" fill="#22a785"/>
<rect x="26" y="8" width="2" height="2" fill="#2eb37c"/>
<rect x="28" y="8" width="2" height="2" fill="#3bbb75"/>
<rect x="30" y="8" width="2" height="2" fill="#44bf70"/>
<rect x="32" y="8" width="2" height="2" fill="#40bd72"/>
<rect x="34" y="8" width="2" height="2" fill="#3dbc74"/>
<rect x="36" y="8" width="2" height="2" fill="#2eb37c"/>
<rect x="38" y="8" width="2" height="2" fill="#2fb47c"/>
<rect x="44" y="8" width="2" height="2" fill="#2eb37c"/>
<rect x="46" y="8" width="2" height="2" fill="#22a884"/>
<rect x="0" y="10" width="2" height="2" fill="#31b57b"/>
<rect x="4" y="10" width="2" height="2" fill="#4ac16d"/>
<rect x="6" y="10" width="2" height="2" fill="#4ec36b"/>
<rect x="8" y="10" width="2" height="2" fill="#5cc863"/>
<rect x="10" y="10" width="2" height="2" fill="#4cc26c"/>
<rect x="14" y="10" width="2" height="2" fill="#3dbc74"/>
<rect x="18" y="10" width="2" height="2" fill="#2db27d"/>
<rect x="20" y="10" width="2" height="2" fill="#29af7f"/>
<rect x="22" y="10" width="2" height="2" fill="#4ac16d"/>
<rect x="24" y="10" width="2" height="2" fill="#3dbc74"/>
<rect x="26" y="10" width="2" height="2" fill="#27ad81"/>
<rect x="28" y="10" width="2" height="2" fill="#40bd72"/>
<rect x="34" y="10" width="2" height="2" fill="#46c06f"/>
<rect x="36" y="10" width="2" height="2" fill="#2db27d"/>
<rect x="40" y="10" width="2" height="2" fill="#25ac82"/>
<rect x="44" y="10" width="2" height="2" fill="#31b57b"/>
<rect x="46" y="10" width="2" height="2" fill="#40bd72"/>
<rect x="0" y="12" width="2" height="2" fill="#2fb47c"/>
<rect x="2" y="12" width="2" height="2" fill="#46c06f"/>
<rect x="4" y="12" width="2" height="2" fill="#54c568"/>
<rect x="6" y="12" width="2" height="2" fill="#3dbc74"/>
<rect x="10" y="12" width="2" height="2" fill="#42be71"/>
<rect x="16" y="12" width="2" height="2" fill="#44bf70"/>
<rect x="22" y="12" width="2" height="2" fill="#2ab07f"/>
<rect x="24" y="12" width="2" height="2" fill="#3fbc73"/>
<rect x="28" y="12" width="2" height="2" fill="#48c16e"/>
<rect x="30" y="12" width="2" height="2" fill="#50c46a"/>
<rect x="32" y="12" width="2" height="2" fill="#44bf70"/>
<rect x="34" y="12" width="2" height="2" fill="#2cb17e"/>
<rect x="36" y="12" width="2" height="2" fill="#3fbc73"/>
<rect x="38" y="12" width="2" height="2" fill="#2ab07f"/>
<rect x="42" y="12" width="2" height="2" fill="#69cd5b"/>
<rect x="46" y="12" width="2" height="2" fill="#2eb37c"/>
<rect x="4" y="14" width="2" height="2" fill="#46c06f"/>
<rect x="16" y="14" width="2" height="2" fill="#2cb17e"/>
<rect x="18" y="14" width="2" height="2" fill="#2cb17e"/>
<rect x="20" y="14" width="2" height="2" fill="#27ad81"/>
<rect x="22" y="14" width="2" height="2" fill="#2ab07f"/>
<rect x="24" y="14" width="2" height="2" fill="#4cc26c"/>
<rect x="28" y="14" width="2" height="2" fill="#2fb47c"/>
<rect x="32" y="14" width="2" height="2" fill="#46c06f"/>
<rect x="36" y="14" width="2" height="2" fill="#2eb37c"/>
<rect x="38" y="14" width="2" height="2" fill="#42be71"/>
<rect x="42" y="14" width="2" height="2" fill="#3dbc74"/>
<rect x="44" y="14" width="2" height="2" fill="#31b57b"/>
<rect x="46" y="14" width="2" height="2" fill="#31b57b"/>
<rect x="0" y="16" width="2" height="2" fill="#3fbc73"/>
<rect x="2" y="16" width="2" height="2" fill="#28ae80"/>
<rect x="4" y="16" width="2" height="2" fill="#31b57b"/>
<rect x="6" y="16" width="2" height="2" fill="#44bf70"/>
<rect x="8" y="16" width="2" height="2" fill="#40bd72"/>
<rect x="12" y="16" width="2" height="2" fill="#31b57b"/>
<rect x="14" y="16" width="2" height="2" fill="#44bf70"/>
<rect x="18" y="16" width="2" height="2" fill="#40bd72"/>
<rect x="20" y="16" width="2" height="2" fill="#44bf70"/>
<rect x="22" y="16" width="2" height="2" fill="#2db27d"/>
<rect x="24" y="16" width="2" height="2" fill="#2cb17e"/>
<rect x="26" y="16" width="2" height="2" fill="#2ab07f"/>
<rect x="28" y="16" width="2" height="2" fill="#3fbc73"/>
<rect x="30" y="16" width="2" height="2" fill="#40bd72"/>
<rect x="32" y="16" width="2" height="2" fill="#60ca60"/>
<rect x="34" y="16" width="2" height="2" fill="#46c06f"/>
<rect x="36" y="16" width="2" height="2" fill="#2eb37c"/>
<rect x="38" y="16" width="2" height="2" fill="#44bf70"/>
<rect x="40" y="16" width="2" height="2" fill="#31b57b"/>
<rect x="44" y="16" width="2" height="2" fill="#2fb47c"/>
<rect x="46" y="16" width="2" height="2" fill="#24aa83"/>
<rect x="6" y="18" width="2" height="2" fill="#44bf70"/>
<rect x="8" y="18" width="2" height="2" fill="#32b67a"/>
<rect x="12" y="18" width="2" height="2" fill="#3dbc74"/>
<rect x="14" y="18" width="2" height="2" fill="#26ad81"/>
<rect x="18" y="18" width="2" height="2" fill="#50c46a"/>
<rect x="24" y="18" width="2" height="2" fill="#42be71"/>
<rect x="28" y="18" width="2" height="2" fill="#29af7f"/>
<rect x="30" y="18" width="2" height="2" fill="#4ac16d"/>
<rect x="34" y="18" width="2" height="2" fill="#54c568"/>
<rect x="38" y="18" width="2" height="2" fill="#2db27d"/>
<rect x="40" y="18" width="2" height="2" fill="#32b67a"/>
<rect x="42" y="18" width="2" height="2" fill="#28ae80"/>
<rect x="44" y="18" width="2" height="2" fill="#48c16e"/>
<rect x="46" y="18" width="2" height="2" fill="#2ab07f"/>
<rect x="0" y="20" width="2" height="2" fill="#24aa83"/>
<rect x="4" y="20" width="2" height="2" fill="#46c06f"/>
<rect x="6" y="20" width="2" height="2" fill="#1fa287"/>
<rect x="10" y="20" width="2" height="2" fill="#3dbc74"/>
<rect x="12" y="20" width="2" height="2" fill="#46c06f"/>
<rect x="14" y="20" width="2" height="2" fill="#2db27d"/>
<rect x="16" y="20" width="2" height="2" fill="#2eb37c"/>
<rect x="18" y="20" width="2" height="2" fill="#3dbc74"/>
<rect x="22" y="20" width="2" height="2" fill="#23a983"/>
<rect x="24" y="20" width="2" height="2" fill="#31b57b"/>
<rect x="30" y="20" width="2" height="2" fill="#2eb37c"/>
<rect x="32" y="20" width="2" height="2" fill="#29af7f"/>
<rect x="34" y="20" width="2" height="2" fill="#2fb47c"/>
<rect x="40" y="20" width="2" height="2" fill="#40bd72"/>
<rect x="42" y="20" width="2" height="2" fill="#54c568"/>
<rect x="44" y="20" width="2" height="2" fill="#2eb37c"/>
<rect x="46" y="20" width="2" height="2" fill="#32b67a"/>
<rect x="0" y="22" width="2" height="2" fill="#2fb47c"/>
<rect x="2" y="22" width="2" height="2" fill="#42be71"/>
<rect x="4" y="22" width="2" height="2" fill="#4cc26c"/>
<rect x="8" y="22" width="2" height="2" fill="#32b67a"/>
<rect x="10" y="22" width="2" height="2" fill="#23a983"/>
<rect x="12" y="22" width="2" height="2" fill="#3dbc74"/>
<rect x="14" y="22" width="2" height="2" fill="#2eb37c"/>
<rect x="16" y="22" width="2" height="2" fill="#42be71"/>
<rect x="18" y="22" width="2" height="2" fill="#52c569"/>
<rect x="20" y="22" width="2" height="2" fill="#27ad81"/>
<rect x="22" y="22" width="2" height="2" fill="#31b57b"/>
<rect x="24" y="22" width="2" height="2" fill="#31b57b"/>
<rect x="26" y="22" width="2" height="2" fill="#31b57b"/>
<rect x="32" y="22" width="2" height="2" fill="#25ab82"/>
<rect x="34" y="22" width="2" height="2" fill="#3fbc73"/>
<rect x="38" y="22" width="2" height="2" fill="#46c06f"/>
<rect x="40" y="22" width="2" height="2" fill="#3fbc73"/>
<rect x="42" y="22" width="2" height="2" fill="#3bbb75"/>
<rect x="44" y="22" width="2" height="2" fill="#3dbc74"/>
<rect x="4" y="24" width="2" height="2" fill="#3dbc74"/>
<rect x="6" y="24" width="2" height="2" fill="#2ab07f"/>
<rect x="14" y="24" width="2" height="2" fill="#4ac16d"/>
<rect x="16" y="24" width="2" height="2" fill="#42be71"/>
<rect x="20" y="24" width="2" height="2" fill="#42be71"/>
<rect x="28" y="24" width="2" height="2" fill="#29af7f"/>
<rect x="34" y="24" width="2" height="2" fill="#31b57b"/>
<rect x="36" y="24" width="2" height="2" fill="#46c06f"/>
<rect x="38" y="24" width="2" height="2" fill="#29af7f"/>
<rect x="40" y="24" width="2" height="2" fill="#46c06f"/>
<rect x="42" y="24" width="2" height="2" fill="#40bd72"/>
<rect x="44" y="24" width="2" height="2" fill="#3dbc74"/>
<rect x="46" y="24" width="2" height="2" fill="#20a486"/>
<rect x="0" y="26" width="2" height="2" fill="#25ab82"/>
<rect x="2" y="26" width="2" height="2" fill="#4ac16d"/>
<rect x="8" y="26" width="2" height="2" fill="#2fb47c"/>
<rect x="10" y="26" width="2" height="2" fill="#48c16e"/>
<rect x="12" y="26" width="2" height="2" fill="#32b67a"/>
<rect x="14" y="26" width="2" height="2" fill="#42be71"/>
<rect x="16" y="26" width="2" height="2" fill="#31b57b"/>
<rect x="18" y="26" width="2" height="2" fill="#25ac82"/>
<rect x="26" y="26" width="2" height="2" fill="#46c06f"/>
<rect x="28" y="26" width="2" height="2" fill="#3dbc74"/>
<rect x="30" y="26" width="2" height="2" fill="#2eb37c"/>
<rect x="32" y="26" width="2" height="2" fill="#2fb47c"/>
<rect x="34" y="26" width="2" height="2" fill="#3fbc73"/>
<rect x="36" y="26" width="2" height="2" fill="#2db27d"/>
<rect x="38" y="26" width="2" height="2" fill="#25ac82"/>
<rect x="40" y="26" width="2" height="2" fill="#4cc26c"/>
<rect x="42" y="26" width="2" height="2" fill="#58c765"/>
<rect x="44" y="26" width="2" height="2" fill="#2fb47c"/>
<rect x="0" y="28" width="2" height="2" fill="#29af7f"/>
<rect x="2" y="28" width="2" height="2" fill="#29af7f"/>
<rect x="8" y="28" width="2" height="2" fill="#2db27d"/>
<rect x="10" y="28" width="2" height="2" fill="#2ab07f"/>
<rect x="12" y="28" width="2" height="2" fill="#28ae80"/>
<rect x="14" y="28" width="2" height="2" fill="#31b57b"/>
<rect x="16" y="28" width="2" height="2" fill="#2db27d"/>
<rect x="20" y="28" width="2" height="2" fill="#2eb37c"/>
<rect x="26" y="28" width="2" height="2" fill="#48c16e"/>
<rect x="28" y="28" width="2" height="2" fill="#4ac16d"/>
<rect x="30" y="28" width="2" height="2" fill="#44bf70"/>
<rect x="32" y="28" width="2" height="2" fill="#3dbc74"/>
<rect x="36" y="28" width="2" height="2" fill="#2fb47c"/>
<rect x="38" y="28" width="2" height="2" fill="#2eb37c"/>
<rect x="40" y="28" width="2" height="2" fill="#58c765"/>
<rect x="0" y="30" width="2" height="2" fill="#2fb47c"/>
<rect x="6" y="30" width="2" height="2" fill="#2eb37c"/>
<rect x="8" y="30" width="2" height="2" fill="#29af7f"/>
<rect x="10" y="30" width="2" height="2" fill="#2cb17e"/>
<rect x="12" y="30" width="2" height="2" fill="#4ec36b"/>
<rect x="14" y="30" width="2" height="2" fill="#2ab07f"/>
<rect x="16" y="30" width="2" height="2" fill="#44bf70"/>
<rect x="18" y="30" width="2" height="2" fill="#29af7f"/>
<rect x="20" y="30" width="2" height="2" fill="#2db27d"/>
<rect x="26" y="30" width="2" height="2" fill="#2cb17e"/>
<rect x="28" y="30" width="2" height="2" fill="#3bbb75"/>
<rect x="30" y="30" width="2" height="2" fill="#31b57b"/>
<rect x="32" y="30" width="2" height="2" fill="#50c46a"/>
<rect x="34" y="30" width="2" height="2" fill="#2ab07f"/>
<rect x="36" y="30" width="2" height="2" fill="#31b57b"/>
<rect x="38" y="30" width="2" height="2" fill="#3bbb75"/>
<rect x="0" y="32" width="2" height="2" fill="#40bd72"/>
<rect x="2" y="32" width="2" height="2" fill="#24aa83"/>
<rect x="4" y="32" width="2" height="2" fill="#32b67a"/>
<rect x="6" y="32" width="2" height="2" fill="#2eb37c"/>
<rect x="10" y="32" width="2" height="2" fill="#42be71"/>
<rect x="12" y="32" width="2" height="2" fill="#40bd72"/>
<rect x="14" y="32" width="2" height="2" fill="#31b57b"/>
<rect x="16" y="32" width="2" height="2" fill="#2cb17e"/>
<rect x="18" y="32" width="2" height="2" fill="#26ad81"/>
<rect x="26" y="32" width="2" height="2" fill="#2eb37c"/>
<rect x="28" y="32" width="2" height="2" fill="#31b57b"/>
<rect x="30" y="32" width="2" height="2" fill="#3fbc73"/>
<rect x="32" y="32" width="2" height="2" fill="#2eb37c"/>
<rect x="36" y="32" width="2" height="2" fill="#42be71"/>
<rect x="38" y="32" width="2" height="2" fill="#2eb37c"/>
<rect x="40" y="32" width="2" height="2" fill="#50c46a"/>
<rect x="44" y="32" width="2" height="2" fill="#22a884"/>
<rect x="2" y="34" width="2" height="2" fill="#22a785"/>
<rect x="4" y="34" width="2" height="2" fill="#3dbc74"/>
<rect x="6" y="34" width="2" height="2" fill="#3fbc73"/>
<rect x="12" y="34" width="2" height="2" fill="#3dbc74"/>
<rect x="14" y="34" width="2" height="2" fill="#31b57b"/>
<rect x="16" y="34" width="2" height="2" fill="#31b57b"/>
<rect x="18" y="34" width="2" height="2" fill="#48c16e"/>
<rect x="20" y="34" width="2" height="2" fill="#3fbc73"/>
<rect x="24" y="34" width="2" height="2" fill="#4ec36b"/>
<rect x="26" y="34" width="2" height="2" fill="#3dbc74"/>
<rect x="28" y="34" width="2" height="2" fill="#42be71"/>
<rect x="30" y="34" width="2" height="2" fill="#29af7f"/>
<rect x="32" y="34" width="2" height="2" fill="#4ec36b"/>
<rect x="34" y="34" width="2" height="2" fill="#3dbc74"/>
<rect x="36" y="34" width="2" height="2" fill="#2cb17e"/>
<rect x="40" y="34" width="2" height="2" fill="#4cc26c"/>
<rect x="42" y="34" width="2" height="2" fill="#50c46a"/>
<rect x="44" y="34" width="2" height="2" fill="#2fb47c"/>
<rect x="46" y="34" width="2" height="2" fill="#26ad81"/>
<rect x="0" y="36" width="2" height="2" fill="#48c16e"/>
<rect x="2" y="36" width="2" height="2" fill="#50c46a"/>
<rect x="4" y="36" width="2" height="2" fill="#3dbc74"/>
<rect x="6" y="36" width="2" height="2" fill="#3fbc73"/>
<rect x="8" y="36" width="2" height="2" fill="#2db27d"/>
<rect x="14" y="36" width="2" height="2" fill="#2ab07f"/>
<rect x="16" y="36" width="2" height="2" fill="#2eb37c"/>
<rect x="18" y="36" width="2" height="2" fill="#3fbc73"/>
<rect x="20" y="36" width="2" height="2" fill="#2db27d"/>
<rect x="22" y="36" width="2" height="2" fill="#2ab07f"/>
<rect x="24" y="36" width="2" height="2" fill="#2eb37c"/>
<rect x="26" y="36" width="2" height="2" fill="#3dbc74"/>
<rect x="28" y="36" width="2" height="2" fill="#44bf70"/>
<rect x="30" y="36" width="2" height="2" fill="#2eb37c"/>
<rect x="32" y="36" width="2" height="2" fill="#3bbb75"/>
<rect x="34" y="36" width="2" height="2" fill="#48c16e"/>
<rect x="36" y="36" width="2" height="2" fill="#3dbc74"/>
<rect x="40" y="36" width="2" height="2" fill="#2cb17e"/>
<rect x="42" y="36" width="2" height="2" fill="#2eb37c"/>
<rect x="44" y="36" width="2" height="2" fill="#31b57b"/>
<rect x="46" y="36" width="2" height="2" fill="#27ad81"/>
<rect x="0" y="38" width="2" height="2" fill="#54c568"/>
<rect x="2" y="38" width="2" height="2" fill="#3fbc73"/>
<rect x="4" y="38" width="2" height="2" fill="#3bbb75"/>
<rect x="8" y="38" width="2" height="2" fill="#5cc863"/>
<rect x="10" y="38" width="2" height="2" fill="#2fb47c"/>
<rect x="18" y="38" width="2" height="2" fill="#46c06f"/>
<rect x="20" y="38" width="2" height="2" fill="#2eb37c"/>
<rect x="22" y="38" width="2" height="2" fill="#2db27d"/>
<rect x="24" y="38" width="2" height="2" fill="#46c06f"/>
<rect x="28" y="38" width="2" height="2" fill="#48c16e"/>
<rect x="30" y="38" width="2" height="2" fill="#24aa83"/>
<rect x="32" y="38" width="2" height="2" fill="#58c765"/>
<rect x="34" y="38" width="2" height="2" fill="#48c16e"/>
<rect x="36" y="38" width="2" height="2" fill="#4cc26c"/>
<rect x="38" y="38" width="2" height="2" fill="#24aa83"/>
<rect x="2" y="40" width="2" height="2" fill="#5cc863"/>
<rect x="8" y="40" width="2" height="2" fill="#3fbc73"/>
<rect x="10" y="40" width="2" height="2" fill="#22a884"/>
<rect x="14" y="40" width="2" height="2" fill="#42be71"/>
<rect x="16" y="40" width="2" height="2" fill="#44bf70"/>
<rect x="22" y="40" width="2" height="2" fill="#42be71"/>
<rect x="24" y="40" width="2" height="2" fill="#21a585"/>
<rect x="26" y="40" width="2" height="2" fill="#4ec36b"/>
<rect x="30" y="40" width="2" height="2" fill="#2eb37c"/>
<rect x="32" y="40" width="2" height="2" fill="#2cb17e"/>
<rect x="34" y="40" width="2" height="2" fill="#3fbc73"/>
<rect x="36" y="40" width="2" height="2" fill="#32b67a"/>
<rect x="42" y="40" width="2" height="2" fill="#24aa83"/>
<rect x="44" y="40" width="2" height="2" fill="#3fbc73"/>
<rect x="46" y="40" width="2" height="2" fill="#25ab82"/>
<rect x="0" y="42" width="2" height="2" fill="#31b57b"/>
<rect x="2" y="42" width="2" height="2" fill="#31b57b"/>
<rect x="4" y="42" width="2" height="2" fill="#20a386"/>
<rect x="8" y="42" width="2" height="2" fill="#31b57b"/>
<rect x="10" y="42" width="2" height="2" fill="#27ad81"/>
<rect x="12" y="42" width="2" height="2" fill="#50c46a"/>
<rect x="26" y="42" width="2" height="2" fill="#2cb17e"/>
<rect x="28" y="42" width="2" height="2" fill="#28ae80"/>
<rect x="30" y="42" width="2" height="2" fill="#31b57b"/>
<rect x="32" y="42" width="2" height="2" fill="#28ae80"/>
<rect x="34" y="42" width="2" height="2" fill="#3dbc74"/>
<rect x="36" y="42" width="2" height="2" fill="#29af7f"/>
<rect x="40" y="42" width="2" height="2" fill="#28ae80"/>
<rect x="44" y="42" width="2" height="2" fill="#2db27d"/>
<rect x="0" y="44" width="2" height="2" fill="#2db27d"/>
<rect x="4" y="44" width="2" height="2" fill="#40bd72"/>
<rect x="6" y="44" width="2" height="2" fill="#27ad81"/>
<rect x="8" y="44" width="2" height="2" fill="#3fbc73"/>
<rect x="10" y="44" width="2" height="2" fill="#2fb47c"/>
<rect x="12" y="44" width="2" height="2" fill="#5ac864"/>
<rect x="14" y="44" width="2" height="2" fill="#44bf70"/>
<rect x="18" y="44" width="2" height="2" fill="#4ac16d"/>
<rect x="24" y="44" width="2" height="2" fill="#3bbb75"/>
<rect x="26" y="44" width="2" height="2" fill="#28ae80"/>
<rect x="28" y="44" width="2" height="2" fill="#4cc26c"/>
<rect x="30" y="44" width="2" height="2" fill="#2eb37c"/>
<rect x="34" y="44" width="2" height="2" fill="#52c569"/>
<rect x="36" y="44" width="2" height="2" fill="#3dbc74"/>
<rect x="38" y="44" width="2" height="2" fill="#2eb37c"/>
<rect x="40" y="44" width="2" height="2" fill="#2cb17e"/>
<rect x="42" y="44" width="2" height="2" fill="#2fb47c"/>
<rect x="2" y="46" width="2" height="2" fill="#2db27d"/>
<rect x="6" y="46" width="2" height="2" fill="#3fbc73"/>
<rect x="8" y="46" width="2" height="2" fill="#2cb17e"/>
<rect x="10" y="46" width="2" height="2" fill="#46c06f"/>
<rect x="12" y="46" width="2" height="2" fill="#42be71"/>
<rect x="14" y="46" width="2" height="2" fill="#46c06f"/>
<rect x="16" y="46" width="2" height="2" fill="#44bf70"/>
<rect x="18" y="46" width="2" height="2" fill="#56c667"/>
<rect x="20" y="46" width="2" height="2" fill="#42be71"/>
<rect x="22" y="46" width="2" height="2" fill="#2ab07f"/>
<rect x="24" y="46" width="2" height="2" fill="#40bd72"/>
<rect x="26" y="46" width="2" height="2" fill="#31b57b"/>
<rect x="28" y="46" width="2" height="2" fill="#29af7f"/>
<rect x="30" y="46" width="2" height="2" fill="#4cc26c"/>
<rect x="32" y="46" width="2" height="2" fill="#2db27d"/>
<rect x="34" y="46" width="2" height="2" fill="#3bbb75"/>
<rect x="38" y="46" width="2" height="2" fill="#2db27d"/>
<rect x="40" y="46" width="2" height="2" fill="#2db27d"/>
<rect x="42" y="46" width="2" height="2" fill="#46c06f"/>
<rect x="44" y="46" width="2" height="2" fill="#2eb37c"/>
</pattern>
<linearGradient id="gtop" x1="0" y1="0" x2="0" y2="1"><stop offset="0" stop-color="#1f9f88"/><stop offset="0.3" stop-color="#26ad81"/><stop offset="0.6" stop-color="#6ece58" stop-opacity="0.85"/><stop offset="1" stop-color="#dfe318" stop-opacity="0"/></linearGradient><linearGradient id="gbot" x1="0" y1="0" x2="0" y2="1"><stop offset="0" stop-color="#dfe318" stop-opacity="0"/><stop offset="0.35" stop-color="#6ece58" stop-opacity="0.85"/><stop offset="0.65" stop-color="#2cb17e"/><stop offset="1" stop-color="#1f9f88"/></linearGradient><linearGradient id="gmid" x1="0" y1="0" x2="0" y2="1"><stop offset="0" stop-color="#cae11f" stop-opacity="0"/><stop offset="0.125" stop-color="#58c765" stop-opacity="0.9"/><stop offset="0.875" stop-color="#58c765" stop-opacity="0.9"/><stop offset="1" stop-color="#cae11f" stop-opacity="0"/></linearGradient></defs>
<rect x="254" y="151" width="159" height="12" fill="url(#gtop)" shape-rendering="auto"/>
<defs><linearGradient id="gfr" x1="0" y1="0" x2="0" y2="1"><stop offset="0" stop-color="#22a884" stop-opacity="0.9"/><stop offset="0.4" stop-color="#32b67a" stop-opacity="0.85"/><stop offset="1" stop-color="#86d549" stop-opacity="0"/></linearGradient><linearGradient id="gfr2" x1="0" y1="0" x2="0" y2="1"><stop offset="0" stop-color="#86d549" stop-opacity="0"/><stop offset="0.6" stop-color="#32b67a" stop-opacity="0.85"/><stop offset="1" stop-color="#22a884" stop-opacity="0.9"/></linearGradient></defs>
<rect x="254" y="154" width="3" height="9" fill="url(#gfr)" shape-rendering="auto"/>
<rect x="254" y="464" width="3" height="4" fill="url(#gfr2)" shape-rendering="auto"/>
<rect x="257" y="154" width="3" height="6" fill="url(#gfr)" shape-rendering="auto"/>
<rect x="257" y="461" width="3" height="7" fill="url(#gfr2)" shape-rendering="auto"/>
<rect x="260" y="154" width="3" height="6" fill="url(#gfr)" shape-rendering="auto"/>
<rect x="260" y="461" width="3" height="7" fill="url(#gfr2)" shape-rendering="auto"/>
<rect x="263" y="154" width="3" height="9" fill="url(#gfr)" shape-rendering="auto"/>
<rect x="263" y="464" width="3" height="4" fill="url(#gfr2)" shape-rendering="auto"/>
<rect x="266" y="154" width="3" height="7" fill="url(#gfr)" shape-rendering="auto"/>
<rect x="266" y="459" width="3" height="9" fill="url(#gfr2)" shape-rendering="auto"/>
<rect x="269" y="154" width="3" height="7" fill="url(#gfr)" shape-rendering="auto"/>
<rect x="269" y="459" width="3" height="9" fill="url(#gfr2)" shape-rendering="auto"/>
<rect x="272" y="154" width="3" height="10" fill="url(#gfr)" shape-rendering="auto"/>
<rect x="272" y="463" width="3" height="5" fill="url(#gfr2)" shape-rendering="auto"/>
<rect x="275" y="154" width="3" height="10" fill="url(#gfr)" shape-rendering="auto"/>
<rect x="275" y="460" width="3" height="8" fill="url(#gfr2)" shape-rendering="auto"/>
<rect x="278" y="154" width="3" height="5" fill="url(#gfr)" shape-rendering="auto"/>
<rect x="278" y="464" width="3" height="4" fill="url(#gfr2)" shape-rendering="auto"/>
<rect x="281" y="154" width="3" height="9" fill="url(#gfr)" shape-rendering="auto"/>
<rect x="281" y="463" width="3" height="5" fill="url(#gfr2)" shape-rendering="auto"/>
<rect x="284" y="154" width="3" height="6" fill="url(#gfr)" shape-rendering="auto"/>
<rect x="284" y="461" width="3" height="7" fill="url(#gfr2)" shape-rendering="auto"/>
<rect x="287" y="154" width="3" height="8" fill="url(#gfr)" shape-rendering="auto"/>
<rect x="287" y="459" width="3" height="9" fill="url(#gfr2)" shape-rendering="auto"/>
<rect x="290" y="154" width="3" height="5" fill="url(#gfr)" shape-rendering="auto"/>
<rect x="290" y="460" width="3" height="8" fill="url(#gfr2)" shape-rendering="auto"/>
<rect x="293" y="154" width="3" height="6" fill="url(#gfr)" shape-rendering="auto"/>
<rect x="293" y="460" width="3" height="8" fill="url(#gfr2)" shape-rendering="auto"/>
<rect x="296" y="154" width="3" height="6" fill="url(#gfr)" shape-rendering="auto"/>
<rect x="296" y="458" width="3" height="10" fill="url(#gfr2)" shape-rendering="auto"/>
<rect x="299" y="154" width="3" height="7" fill="url(#gfr)" shape-rendering="auto"/>
<rect x="299" y="462" width="3" height="6" fill="url(#gfr2)" shape-rendering="auto"/>
<rect x="302" y="154" width="3" height="4" fill="url(#gfr)" shape-rendering="auto"/>
<rect x="302" y="460" width="3" height="8" fill="url(#gfr2)" shape-rendering="auto"/>
<rect x="305" y="154" width="3" height="5" fill="url(#gfr)" shape-rendering="auto"/>
<rect x="305" y="464" width="3" height="4" fill="url(#gfr2)" shape-rendering="auto"/>
<rect x="308" y="154" width="3" height="8" fill="url(#gfr)" shape-rendering="auto"/>
<rect x="308" y="462" width="3" height="6" fill="url(#gfr2)" shape-rendering="auto"/>
<rect x="311" y="154" width="3" height="4" fill="url(#gfr)" shape-rendering="auto"/>
<rect x="311" y="460" width="3" height="8" fill="url(#gfr2)" shape-rendering="auto"/>
<rect x="314" y="154" width="3" height="5" fill="url(#gfr)" shape-rendering="auto"/>
<rect x="314" y="462" width="3" height="6" fill="url(#gfr2)" shape-rendering="auto"/>
<rect x="317" y="154" width="3" height="9" fill="url(#gfr)" shape-rendering="auto"/>
<rect x="317" y="460" width="3" height="8" fill="url(#gfr2)" shape-rendering="auto"/>
<rect x="320" y="154" width="3" height="6" fill="url(#gfr)" shape-rendering="auto"/>
<rect x="320" y="462" width="3" height="6" fill="url(#gfr2)" shape-rendering="auto"/>
<rect x="323" y="154" width="3" height="6" fill="url(#gfr)" shape-rendering="auto"/>
<rect x="323" y="463" width="3" height="5" fill="url(#gfr2)" shape-rendering="auto"/>
<rect x="326" y="154" width="3" height="6" fill="url(#gfr)" shape-rendering="auto"/>
<rect x="326" y="458" width="3" height="10" fill="url(#gfr2)" shape-rendering="auto"/>
<rect x="329" y="154" width="3" height="7" fill="url(#gfr)" shape-rendering="auto"/>
<rect x="329" y="464" width="3" height="4" fill="url(#gfr2)" shape-rendering="auto"/>
<rect x="332" y="154" width="3" height="8" fill="url(#gfr)" shape-rendering="auto"/>
<rect x="332" y="459" width="3" height="9" fill="url(#gfr2)" shape-rendering="auto"/>
<rect x="335" y="154" width="3" height="7" fill="url(#gfr)" shape-rendering="auto"/>
<rect x="335" y="458" width="3" height="10" fill="url(#gfr2)" shape-rendering="auto"/>
<rect x="338" y="154" width="3" height="4" fill="url(#gfr)" shape-rendering="auto"/>
<rect x="338" y="463" width="3" height="5" fill="url(#gfr2)" shape-rendering="auto"/>
<rect x="341" y="154" width="3" height="5" fill="url(#gfr)" shape-rendering="auto"/>
<rect x="341" y="461" width="3" height="7" fill="url(#gfr2)" shape-rendering="auto"/>
<rect x="344" y="154" width="3" height="10" fill="url(#gfr)" shape-rendering="auto"/>
<rect x="344" y="462" width="3" height="6" fill="url(#gfr2)" shape-rendering="auto"/>
<rect x="347" y="154" width="3" height="8" fill="url(#gfr)" shape-rendering="auto"/>
<rect x="347" y="458" width="3" height="10" fill="url(#gfr2)" shape-rendering="auto"/>
<rect x="350" y="154" width="3" height="6" fill="url(#gfr)" shape-rendering="auto"/>
<rect x="350" y="464" width="3" height="4" fill="url(#gfr2)" shape-rendering="auto"/>
<rect x="353" y="154" width="3" height="9" fill="url(#gfr)" shape-rendering="auto"/>
<rect x="353" y="461" width="3" height="7" fill="url(#gfr2)" shape-rendering="auto"/>
<rect x="356" y="154" width="3" height="7" fill="url(#gfr)" shape-rendering="auto"/>
<rect x="356" y="462" width="3" height="6" fill="url(#gfr2)" shape-rendering="auto"/>
<rect x="359" y="154" width="3" height="4" fill="url(#gfr)" shape-rendering="auto"/>
<rect x="359" y="459" width="3" height="9" fill="url(#gfr2)" shape-rendering="auto"/>
<rect x="362" y="154" width="3" height="10" fill="url(#gfr)" shape-rendering="auto"/>
<rect x="362" y="462" width="3" height="6" fill="url(#gfr2)" shape-rendering="auto"/>
<rect x="365" y="154" width="3" height="7" fill="url(#gfr)" shape-rendering="auto"/>
<rect x="365" y="461" width="3" height="7" fill="url(#gfr2)" shape-rendering="auto"/>
<rect x="368" y="154" width="3" height="9" fill="url(#gfr)" shape-rendering="auto"/>
<rect x="368" y="460" width="3" height="8" fill="url(#gfr2)" shape-rendering="auto"/>
<rect x="371" y="154" width="3" height="10" fill="url(#gfr)" shape-rendering="auto"/>
<rect x="371" y="462" width="3" height="6" fill="url(#gfr2)" shape-rendering="auto"/>
<rect x="374" y="154" width="3" height="6" fill="url(#gfr)" shape-rendering="auto"/>
<rect x="374" y="463" width="3" height="5" fill="url(#gfr2)" shape-rendering="auto"/>
<rect x="377" y="154" width="3" height="7" fill="url(#gfr)" shape-rendering="auto"/>
<rect x="377" y="458" width="3" height="10" fill="url(#gfr2)" shape-rendering="auto"/>
<rect x="380" y="154" width="3" height="8" fill="url(#gfr)" shape-rendering="auto"/>
<rect x="380" y="463" width="3" height="5" fill="url(#gfr2)" shape-rendering="auto"/>
<rect x="383" y="154" width="3" height="8" fill="url(#gfr)" shape-rendering="auto"/>
<rect x="383" y="463" width="3" height="5" fill="url(#gfr2)" shape-rendering="auto"/>
<rect x="386" y="154" width="3" height="10" fill="url(#gfr)" shape-rendering="auto"/>
<rect x="386" y="459" width="3" height="9" fill="url(#gfr2)" shape-rendering="auto"/>
<rect x="389" y="154" width="3" height="8" fill="url(#gfr)" shape-rendering="auto"/>
<rect x="389" y="462" width="3" height="6" fill="url(#gfr2)" shape-rendering="auto"/>
<rect x="392" y="154" width="3" height="4" fill="url(#gfr)" shape-rendering="auto"/>
<rect x="392" y="459" width="3" height="9" fill="url(#gfr2)" shape-rendering="auto"/>
<rect x="395" y="154" width="3" height="5" fill="url(#gfr)" shape-rendering="auto"/>
<rect x="395" y="462" width="3" height="6" fill="url(#gfr2)" shape-rendering="auto"/>
<rect x="398" y="154" width="3" height="10" fill="url(#gfr)" shape-rendering="auto"/>
<rect x="398" y="464" width="3" height="4" fill="url(#gfr2)" shape-rendering="auto"/>
<rect x="401" y="154" width="3" height="4" fill="url(#gfr)" shape-rendering="auto"/>
<rect x="401" y="458" width="3" height="10" fill="url(#gfr2)" shape-rendering="auto"/>
<rect x="404" y="154" width="3" height="7" fill="url(#gfr)" shape-rendering="auto"/>
<rect x="404" y="461" width="3" height="7" fill="url(#gfr2)" shape-rendering="auto"/>
<rect x="407" y="154" width="3" height="7" fill="url(#gfr)" shape-rendering="auto"/>
<rect x="407" y="460" width="3" height="8" fill="url(#gfr2)" shape-rendering="auto"/>
<rect x="410" y="154" width="3" height="7" fill="url(#gfr)" shape-rendering="auto"/>
<rect x="410" y="461" width="3" height="7" fill="url(#gfr2)" shape-rendering="auto"/>
<rect x="254" y="460" width="159" height="11" fill="url(#gbot)" shape-rendering="auto"/>
<rect x="254" y="467" width="3" height="2" fill="#25848e" opacity="0.8"/>
<rect x="257" y="153" width="3" height="2" fill="#20938c" opacity="0.8"/>
<rect x="257" y="467" width="3" height="2" fill="#24aa83" opacity="0.8"/>
<rect x="260" y="151" width="3" height="2" fill="#20a386" opacity="0.8"/>
<rect x="260" y="469" width="3" height="2" fill="#1fa088" opacity="0.8"/>
<rect x="263" y="153" width="3" height="2" fill="#21a685" opacity="0.8"/>
<rect x="263" y="469" width="3" height="2" fill="#1f948c" opacity="0.8"/>
<rect x="263" y="467" width="3" height="2" fill="#22a785" opacity="0.8"/>
<rect x="266" y="469" width="3" height="2" fill="#24878e" opacity="0.8"/>
<rect x="266" y="467" width="3" height="2" fill="#1f9f88" opacity="0.8"/>
<rect x="269" y="469" width="3" height="2" fill="#20928c" opacity="0.8"/>
<rect x="272" y="469" width="3" height="2" fill="#2eb37c" opacity="0.8"/>
<rect x="272" y="467" width="3" height="2" fill="#28ae80" opacity="0.8"/>
<rect x="275" y="151" width="3" height="2" fill="#20a386" opacity="0.8"/>
<rect x="275" y="153" width="3" height="2" fill="#21a685" opacity="0.8"/>
<rect x="278" y="151" width="3" height="2" fill="#1f9e89" opacity="0.8"/>
<rect x="278" y="153" width="3" height="2" fill="#1f998a" opacity="0.8"/>
<rect x="278" y="469" width="3" height="2" fill="#1f968b" opacity="0.8"/>
<rect x="281" y="153" width="3" height="2" fill="#1f9f88" opacity="0.8"/>
<rect x="281" y="469" width="3" height="2" fill="#24aa83" opacity="0.8"/>
<rect x="284" y="151" width="3" height="2" fill="#20a486" opacity="0.8"/>
<rect x="287" y="153" width="3" height="2" fill="#20a486" opacity="0.8"/>
<rect x="287" y="467" width="3" height="2" fill="#228d8d" opacity="0.8"/>
<rect x="290" y="469" width="3" height="2" fill="#20a386" opacity="0.8"/>
<rect x="290" y="467" width="3" height="2" fill="#2fb47c" opacity="0.8"/>
<rect x="293" y="151" width="3" height="2" fill="#1f988b" opacity="0.8"/>
<rect x="293" y="153" width="3" height="2" fill="#1f978b" opacity="0.8"/>
<rect x="293" y="469" width="3" height="2" fill="#1fa187" opacity="0.8"/>
<rect x="296" y="153" width="3" height="2" fill="#1f9e89" opacity="0.8"/>
<rect x="296" y="469" width="3" height="2" fill="#1f968b" opacity="0.8"/>
<rect x="296" y="467" width="3" height="2" fill="#1fa287" opacity="0.8"/>
<rect x="299" y="151" width="3" height="2" fill="#1f9a8a" opacity="0.8"/>
<rect x="302" y="151" width="3" height="2" fill="#1e9b8a" opacity="0.8"/>
<rect x="302" y="153" width="3" height="2" fill="#228b8d" opacity="0.8"/>
<rect x="302" y="469" width="3" height="2" fill="#1e9b8a" opacity="0.8"/>
<rect x="305" y="153" width="3" height="2" fill="#228b8d" opacity="0.8"/>
<rect x="308" y="469" width="3" height="2" fill="#1fa187" opacity="0.8"/>
<rect x="308" y="467" width="3" height="2" fill="#1fa188" opacity="0.8"/>
<rect x="311" y="469" width="3" height="2" fill="#23898e" opacity="0.8"/>
<rect x="314" y="151" width="3" height="2" fill="#24aa83" opacity="0.8"/>
<rect x="314" y="153" width="3" height="2" fill="#228c8d" opacity="0.8"/>
<rect x="317" y="469" width="3" height="2" fill="#21a585" opacity="0.8"/>
<rect x="317" y="467" width="3" height="2" fill="#1f968b" opacity="0.8"/>
<rect x="320" y="469" width="3" height="2" fill="#1e9c89" opacity="0.8"/>
<rect x="323" y="151" width="3" height="2" fill="#20a486" opacity="0.8"/>
<rect x="323" y="467" width="3" height="2" fill="#22a785" opacity="0.8"/>
<rect x="326" y="151" width="3" height="2" fill="#20a386" opacity="0.8"/>
<rect x="326" y="153" width="3" height="2" fill="#22a884" opacity="0.8"/>
<rect x="326" y="469" width="3" height="2" fill="#1f948c" opacity="0.8"/>
<rect x="326" y="467" width="3" height="2" fill="#26ad81" opacity="0.8"/>
<rect x="329" y="469" width="3" height="2" fill="#1e9c89" opacity="0.8"/>
<rect x="332" y="469" width="3" height="2" fill="#1f9f88" opacity="0.8"/>
<rect x="332" y="467" width="3" height="2" fill="#1f998a" opacity="0.8"/>
<rect x="335" y="153" width="3" height="2" fill="#27ad81" opacity="0.8"/>
<rect x="338" y="467" width="3" height="2" fill="#1f9a8a" opacity="0.8"/>
<rect x="341" y="151" width="3" height="2" fill="#1e9c89" opacity="0.8"/>
<rect x="341" y="153" width="3" height="2" fill="#20a486" opacity="0.8"/>
<rect x="341" y="469" width="3" height="2" fill="#22a785" opacity="0.8"/>
<rect x="341" y="467" width="3" height="2" fill="#20938c" opacity="0.8"/>
<rect x="344" y="151" width="3" height="2" fill="#1fa088" opacity="0.8"/>
<rect x="344" y="153" width="3" height="2" fill="#23a983" opacity="0.8"/>
<rect x="347" y="153" width="3" height="2" fill="#228c8d" opacity="0.8"/>
<rect x="347" y="469" width="3" height="2" fill="#1e9c89" opacity="0.8"/>
<rect x="347" y="467" width="3" height="2" fill="#1fa188" opacity="0.8"/>
<rect x="350" y="153" width="3" height="2" fill="#1f9a8a" opacity="0.8"/>
<rect x="350" y="467" width="3" height="2" fill="#20928c" opacity="0.8"/>
<rect x="353" y="469" width="3" height="2" fill="#1e9c89" opacity="0.8"/>
<rect x="353" y="467" width="3" height="2" fill="#1f9a8a" opacity="0.8"/>
<rect x="356" y="469" width="3" height="2" fill="#1f9e89" opacity="0.8"/>
<rect x="356" y="467" width="3" height="2" fill="#20a486" opacity="0.8"/>
<rect x="359" y="151" width="3" height="2" fill="#1e9d89" opacity="0.8"/>
<rect x="359" y="153" width="3" height="2" fill="#27ad81" opacity="0.8"/>
<rect x="359" y="469" width="3" height="2" fill="#1e9b8a" opacity="0.8"/>
<rect x="359" y="467" width="3" height="2" fill="#1e9d89" opacity="0.8"/>
<rect x="362" y="153" width="3" height="2" fill="#287d8e" opacity="0.8"/>
<rect x="365" y="153" width="3" height="2" fill="#20928c" opacity="0.8"/>
<rect x="365" y="469" width="3" height="2" fill="#1fa187" opacity="0.8"/>
<rect x="368" y="153" width="3" height="2" fill="#1fa188" opacity="0.8"/>
<rect x="368" y="467" width="3" height="2" fill="#24aa83" opacity="0.8"/>
<rect x="371" y="153" width="3" height="2" fill="#2db27d" opacity="0.8"/>
<rect x="371" y="467" width="3" height="2" fill="#1f998a" opacity="0.8"/>
<rect x="374" y="153" width="3" height="2" fill="#1e9c89" opacity="0.8"/>
<rect x="374" y="469" width="3" height="2" fill="#1fa188" opacity="0.8"/>
<rect x="377" y="153" width="3" height="2" fill="#21918c" opacity="0.8"/>
<rect x="377" y="469" width="3" height="2" fill="#21a585" opacity="0.8"/>
<rect x="380" y="151" width="3" height="2" fill="#20a386" opacity="0.8"/>
<rect x="380" y="153" width="3" height="2" fill="#2ab07f" opacity="0.8"/>
<rect x="380" y="467" width="3" height="2" fill="#23a983" opacity="0.8"/>
<rect x="383" y="151" width="3" height="2" fill="#2cb17e" opacity="0.8"/>
<rect x="383" y="153" width="3" height="2" fill="#1f958b" opacity="0.8"/>
<rect x="383" y="467" width="3" height="2" fill="#1f978b" opacity="0.8"/>
<rect x="386" y="469" width="3" height="2" fill="#1f9e89" opacity="0.8"/>
<rect x="389" y="469" width="3" height="2" fill="#34b679" opacity="0.8"/>
<rect x="389" y="467" width="3" height="2" fill="#1f9f88" opacity="0.8"/>
<rect x="392" y="153" width="3" height="2" fill="#27ad81" opacity="0.8"/>
<rect x="392" y="469" width="3" height="2" fill="#21a585" opacity="0.8"/>
<rect x="395" y="151" width="3" height="2" fill="#1f968b" opacity="0.8"/>
<rect x="401" y="151" width="3" height="2" fill="#22a884" opacity="0.8"/>
<rect x="401" y="469" width="3" height="2" fill="#25ab82" opacity="0.8"/>
<rect x="404" y="153" width="3" height="2" fill="#20a386" opacity="0.8"/>
<rect x="404" y="469" width="3" height="2" fill="#228d8d" opacity="0.8"/>
<rect x="410" y="151" width="3" height="2" fill="#23898e" opacity="0.8"/>
<rect x="254" y="285" width="159" height="32" fill="url(#gmid)" shape-rendering="auto"/>
<rect x="254" y="289" width="3" height="24" fill="#38b977"/>
<rect x="257" y="289" width="3" height="24" fill="#2fb47c"/>
<rect x="260" y="289" width="3" height="24" fill="#2cb17e"/>
<rect x="263" y="289" width="3" height="24" fill="#2eb37c"/>
<rect x="266" y="289" width="3" height="24" fill="#3fbc73"/>
<rect x="269" y="289" width="3" height="24" fill="#2db27d"/>
<rect x="272" y="289" width="3" height="24" fill="#4ac16d"/>
<rect x="275" y="289" width="3" height="24" fill="#2db27d"/>
<rect x="278" y="289" width="3" height="24" fill="#44bf70"/>
<rect x="281" y="289" width="3" height="24" fill="#3aba76"/>
<rect x="284" y="289" width="3" height="24" fill="#2cb17e"/>
<rect x="287" y="289" width="3" height="24" fill="#3dbc74"/>
<rect x="290" y="289" width="3" height="24" fill="#37b878"/>
<rect x="293" y="289" width="3" height="24" fill="#2db27d"/>
<rect x="296" y="289" width="3" height="24" fill="#26ad81"/>
<rect x="299" y="289" width="3" height="24" fill="#46c06f"/>
<rect x="302" y="289" width="3" height="24" fill="#37b878"/>
<rect x="305" y="289" width="3" height="24" fill="#44bf70"/>
<rect x="308" y="289" width="3" height="24" fill="#38b977"/>
<rect x="311" y="289" width="3" height="24" fill="#29af7f"/>
<rect x="314" y="289" width="3" height="24" fill="#3dbc74"/>
<rect x="317" y="289" width="3" height="24" fill="#2fb47c"/>
<rect x="320" y="289" width="3" height="24" fill="#32b67a"/>
<rect x="323" y="289" width="3" height="24" fill="#3dbc74"/>
<rect x="326" y="289" width="3" height="24" fill="#25ac82"/>
<rect x="329" y="289" width="3" height="24" fill="#28ae80"/>
<rect x="332" y="289" width="3" height="24" fill="#3dbc74"/>
<rect x="335" y="289" width="3" height="24" fill="#2eb37c"/>
<rect x="338" y="289" width="3" height="24" fill="#2eb37c"/>
<rect x="341" y="289" width="3" height="24" fill="#3aba76"/>
<rect x="344" y="289" width="3" height="24" fill="#3dbc74"/>
<rect x="347" y="289" width="3" height="24" fill="#3fbc73"/>
<rect x="350" y="289" width="3" height="24" fill="#3dbc74"/>
<rect x="353" y="289" width="3" height="24" fill="#3aba76"/>
<rect x="356" y="289" width="3" height="24" fill="#32b67a"/>
<rect x="359" y="289" width="3" height="24" fill="#35b779"/>
<rect x="362" y="289" width="3" height="24" fill="#27ad81"/>
<rect x="365" y="289" width="3" height="24" fill="#54c568"/>
<rect x="368" y="289" width="3" height="24" fill="#3dbc74"/>
<rect x="371" y="289" width="3" height="24" fill="#4ac16d"/>
<rect x="374" y="289" width="3" height="24" fill="#2cb17e"/>
<rect x="377" y="289" width="3" height="24" fill="#3bbb75"/>
<rect x="380" y="289" width="3" height="24" fill="#35b779"/>
<rect x="383" y="289" width="3" height="24" fill="#3bbb75"/>
<rect x="386" y="289" width="3" height="24" fill="#2eb37c"/>
<rect x="389" y="289" width="3" height="24" fill="#2eb37c"/>
<rect x="392" y="289" width="3" height="24" fill="#3dbc74"/>
<rect x="395" y="289" width="3" height="24" fill="#2fb47c"/>
<rect x="398" y="289" width="3" height="24" fill="#32b67a"/>
<rect x="401" y="289" width="3" height="24" fill="#3aba76"/>
<rect x="404" y="289" width="3" height="24" fill="#3aba76"/>
<rect x="407" y="289" width="3" height="24" fill="#3dbc74"/>
<rect x="410" y="289" width="3" height="24" fill="#3dbc74"/>
<rect x="254" y="289" width="159" height="24" fill="url(#tex2)" opacity="0.45"/>
<defs><linearGradient id="gcolT" x1="0" y1="0" x2="0" y2="1"><stop offset="0" stop-color="#f0e51c"/><stop offset="1" stop-color="#f0e51c" stop-opacity="0"/></linearGradient><linearGradient id="gcolB" x1="0" y1="0" x2="0" y2="1"><stop offset="0" stop-color="#32b67a"/><stop offset="1" stop-color="#5ec962" stop-opacity="0"/></linearGradient></defs>
<rect x="307" y="286" width="3" height="12" fill="url(#gcolT)" shape-rendering="auto"/>
<rect x="307" y="312" width="3" height="11" fill="url(#gcolB)" shape-rendering="auto"/>
<rect x="313" y="286" width="3" height="8" fill="url(#gcolT)" shape-rendering="auto"/>
<rect x="313" y="312" width="3" height="9" fill="url(#gcolB)" shape-rendering="auto"/>
<rect x="317" y="286" width="3" height="6" fill="url(#gcolT)" shape-rendering="auto"/>
<rect x="317" y="312" width="3" height="6" fill="url(#gcolB)" shape-rendering="auto"/>
<rect x="329" y="151" width="3" height="2" fill="#440154"/>
<rect x="311" y="151" width="3" height="2" fill="#440154"/>
<rect x="347" y="151" width="3" height="2" fill="#440154"/>
<rect x="314" y="151" width="3" height="2" fill="#440154"/>
<rect x="350" y="151" width="3" height="2" fill="#440154"/>
<rect x="404" y="151" width="3" height="2" fill="#440154"/>
<rect x="368" y="469" width="2" height="2" fill="#440154"/>
<rect x="290" y="469" width="2" height="2" fill="#440154"/>
<rect x="284" y="469" width="2" height="2" fill="#440154"/>
<rect x="329" y="469" width="2" height="2" fill="#440154"/>
<rect x="353" y="469" width="2" height="2" fill="#440154"/>
<rect x="254" y="469" width="2" height="2" fill="#440154"/>
<rect x="254" y="469" width="2" height="2" fill="#440154"/>
<rect x="287" y="469" width="2" height="2" fill="#440154"/>
<rect x="272" y="469" width="2" height="2" fill="#440154"/>
<rect x="299" y="469" width="2" height="2" fill="#440154"/>
<rect x="389" y="151" width="1" height="320" fill="#287d8e"/>
<rect x="389" y="383" width="1" height="4" fill="#440154"/>
<rect x="389" y="279" width="1" height="4" fill="#440154"/>
<rect x="389" y="331" width="1" height="4" fill="#440154"/>
<rect x="389" y="202" width="1" height="4" fill="#440154"/>
<rect x="389" y="414" width="1" height="4" fill="#440154"/>
<rect x="389" y="343" width="1" height="2" fill="#440154"/>
<rect x="389" y="280" width="1" height="4" fill="#440154"/>
<rect x="389" y="364" width="1" height="2" fill="#440154"/>
<rect x="389" y="414" width="1" height="4" fill="#440154"/>
<rect x="389" y="320" width="1" height="3" fill="#440154"/>
<rect x="389" y="287" width="1" height="3" fill="#440154"/>
<rect x="389" y="336" width="1" height="3" fill="#440154"/>
<rect x="389" y="343" width="1" height="4" fill="#440154"/>
<rect x="389" y="181" width="1" height="4" fill="#440154"/>
<rect x="389" y="406" width="1" height="3" fill="#440154"/>
<rect x="389" y="337" width="1" height="4" fill="#440154"/>
<rect x="389" y="160" width="1" height="2" fill="#440154"/>
<rect x="389" y="211" width="1" height="4" fill="#440154"/>
<rect x="389" y="344" width="1" height="3" fill="#440154"/>
<rect x="389" y="310" width="1" height="4" fill="#440154"/>
<rect x="389" y="228" width="1" height="4" fill="#440154"/>
<rect x="389" y="461" width="1" height="4" fill="#440154"/>
<rect x="389" y="385" width="1" height="2" fill="#440154"/>
<rect x="389" y="317" width="1" height="3" fill="#440154"/>
<rect x="389" y="221" width="1" height="2" fill="#440154"/>
<rect x="389" y="289" width="1" height="2" fill="#440154"/>
<rect x="389" y="247" width="1" height="4" fill="#440154"/>
<rect x="389" y="446" width="1" height="4" fill="#440154"/>
<rect x="389" y="174" width="1" height="3" fill="#440154"/>
<rect x="389" y="239" width="1" height="4" fill="#440154"/>
<rect x="247" y="0" width="3" height="311" fill="#00ff00"/>
<rect x="0" y="310" width="248" height="3" fill="#ff0000"/>
<circle cx="248.5" cy="311.5" r="2.6" fill="#6e6e6e" shape-rendering="auto"/>
</svg>
<div class="a" style="left:313px;top:358px;width:1.3px;height:1.3px;background:#9a9a9a"></div><div class="a" style="left:313px;top:361px;width:1.3px;height:1.3px;background:#9a9a9a"></div><div class="a" style="left:313px;top:364px;width:1.3px;height:1.3px;background:#9a9a9a"></div><div class="a" style="left:313px;top:367px;width:1.3px;height:1.3px;background:#9a9a9a"></div><div class="a" style="left:313px;top:370px;width:1.3px;height:1.3px;background:#9a9a9a"></div><div class="a" style="left:313px;top:373px;width:1.3px;height:1.3px;background:#9a9a9a"></div>

<!-- bottom -->
<div class="t" style="left:28px;top:695px;letter-spacing:0.4px">Time-of-flight</div>
<div class="inp" style="left:128px;top:691px;width:100px;height:25px"></div>
<div class="t" style="left:131px;top:695px">999</div>
<div class="a" style="left:234px;top:691px;width:293px;height:25px;border:1px solid #adadad;border-radius:2px;background:linear-gradient(#fbfbfb,#ececec)"></div>
<div class="inp" style="left:533px;top:691px;width:100px;height:25px"></div>
<div class="t" style="left:536px;top:695px">10991</div>
<div class="btn" style="left:639px;top:691px;width:80px;height:25px;border-color:#c8c8c8"></div>
<div class="t z dis" style="left:639px;width:80px;text-align:center;top:695px">Reset</div>
<div class="t" style="left:19px;top:736px;font-size:14.8px">Mouse Buttons: Left -- Rotation, Middle -- Zoom, Right -- Translate. Axes: X = Red; Y = Green; Z = Blue</div>
<div class="btn" style="left:703px;top:730px;width:25px;height:26px"></div>
<div class="t z" style="left:703px;width:25px;text-align:center;top:735px">?</div>
</body></html>
